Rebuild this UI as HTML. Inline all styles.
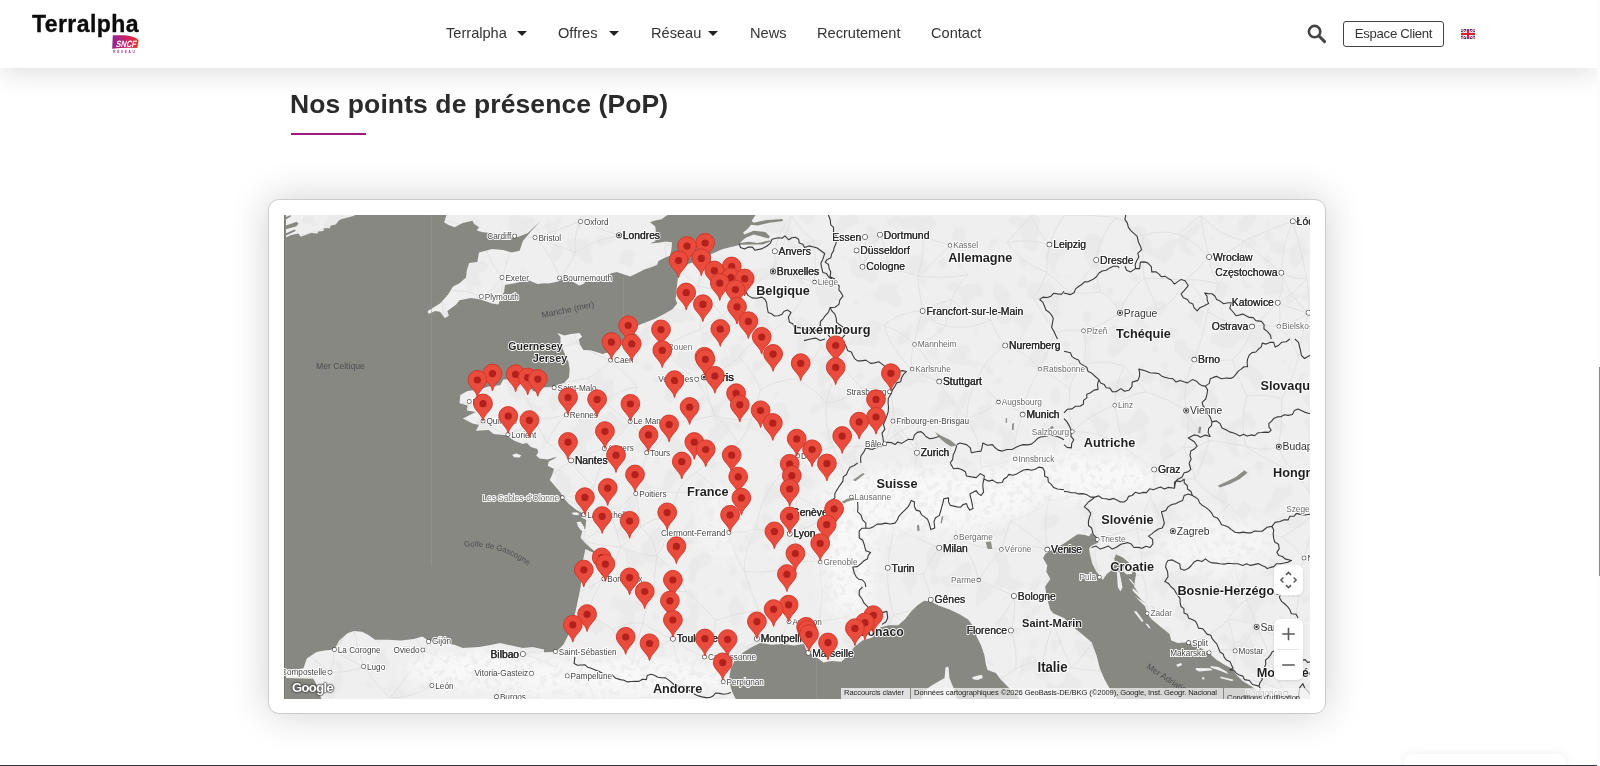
<!DOCTYPE html>
<html lang="fr">
<head>
<meta charset="utf-8">
<title>Nos points de présence (PoP) - Terralpha</title>
<style>
*{box-sizing:border-box;margin:0;padding:0}
html,body{width:1600px;height:766px;overflow:hidden;background:#fff;font-family:"Liberation Sans",Arial,sans-serif;color:#333}
body{position:relative;opacity:.999}
.header{position:absolute;left:0;top:0;width:1597px;height:68px;background:#fff;box-shadow:0 5px 28px rgba(0,0,0,.13);z-index:5}
.logo{position:absolute;left:32px;top:10px;font-weight:700;font-size:23px;letter-spacing:.42px;color:#0c0c0c;line-height:28px;-webkit-text-stroke:.35px #0c0c0c}
.sncf{position:absolute;left:112px;top:35px;width:28px;height:19px}
.nav a{position:absolute;top:24px;font-size:14.6px;line-height:18px;color:#333;text-decoration:none;white-space:nowrap}
.caret{position:absolute;top:31px;width:0;height:0;border-left:5px solid transparent;border-right:5px solid transparent;border-top:5.5px solid #222}
.search{position:absolute;left:1306px;top:23px;width:21px;height:21px}
.btn{position:absolute;left:1343px;top:21px;width:101px;height:26px;border:1px solid #444;border-radius:3px;font-size:13.2px;line-height:24px;text-align:center;color:#333;letter-spacing:-.3px}
.flag{position:absolute;left:1461px;top:29px;width:14px;height:10px}
h1{position:absolute;left:290px;top:88px;font-size:26.5px;line-height:32px;font-weight:700;color:#2b2b2b;white-space:nowrap;letter-spacing:.1px}
.rule{position:absolute;left:291px;top:132.8px;width:75px;height:2px;background:#a3187c}
.card{position:absolute;left:268px;top:199px;width:1058px;height:515px;background:#fff;border:1px solid #cdcdcd;border-radius:11px;box-shadow:0 0 38px rgba(0,0,0,.19)}
.map{position:absolute;left:284px;top:215px;width:1026px;height:484px;overflow:hidden;background:#efefef}
.mapsvg{position:absolute;left:0;top:0;display:block}
.ctl{position:absolute;background:#fff;border-radius:6px;box-shadow:0 1px 3px rgba(0,0,0,.12)}
.attr{position:absolute;font-size:7.6px;line-height:10.5px;color:#222;white-space:nowrap;height:11px;top:473px;padding:0 3px;letter-spacing:-.1px}
.glogo{position:absolute;left:8px;top:465px;font-size:13px;font-weight:700;color:#fff;letter-spacing:-.6px;-webkit-text-stroke:0;text-shadow:0 0 1.5px #444,0 0 1.5px #444,0 0 2px #444,0 0 2px #444}
.sb{position:absolute;left:1597px;top:0;width:3px;height:766px;background:#fcfcfc;z-index:6}
.sb i{position:absolute;left:1.7px;top:367px;width:1.3px;height:208.5px;background:#8a8a8a}
.bottom{position:absolute;left:0;top:764.6px;width:1600px;height:1.4px;background:#34344a}
.widget{position:absolute;left:1404px;top:754px;width:162px;height:30px;background:#fff;border-radius:8px;box-shadow:0 0 10px rgba(0,0,0,.08)}
</style>
</head>
<body>
<div class="header">
  <div class="logo">Terralpha</div>
  <svg class="sncf" viewBox="0 0 28 19"><defs><linearGradient id="sg" x1="0" y1="0" x2="1" y2="0"><stop offset="0" stop-color="#8b2a90"/><stop offset=".5" stop-color="#c81f6c"/><stop offset="1" stop-color="#ea3a28"/></linearGradient></defs><path d="M.8.2H12Q22 .6 26.6 5L25.4 13Q13 12.2.2 13.7Z" fill="url(#sg)"/><text transform="translate(3.6 12) skewX(-14)" font-family="Liberation Sans, Arial, sans-serif" font-size="9.2" font-weight="700" fill="#fff" textLength="20.3" lengthAdjust="spacingAndGlyphs">SNCF</text><text x="1.2" y="18.2" font-family="Liberation Sans, Arial, sans-serif" font-size="3.1" font-weight="700" fill="#9a2a8a" textLength="21.5">RÉSEAU</text></svg>
  <div class="nav">
    <a style="left:446px">Terralpha</a><span class="caret" style="left:517px"></span>
    <a style="left:558px">Offres</a><span class="caret" style="left:609px"></span>
    <a style="left:651px">Réseau</a><span class="caret" style="left:708px"></span>
    <a style="left:750px">News</a>
    <a style="left:817px">Recrutement</a>
    <a style="left:931px">Contact</a>
  </div>
  <svg class="search" viewBox="0 0 21 21"><circle cx="8.6" cy="8.6" r="5.7" fill="none" stroke="#444" stroke-width="2.6"/><path d="M13 13L18.6 18.6" stroke="#444" stroke-width="3" stroke-linecap="round"/></svg>
  <div class="btn">Espace Client</div>
  <svg class="flag" viewBox="0 0 14 10"><rect width="14" height="10" fill="#2a3a8c"/><path d="M0 0L14 10M14 0L0 10" stroke="#fff" stroke-width="2.2"/><path d="M0 0L14 10M14 0L0 10" stroke="#d4213a" stroke-width=".9"/><path d="M7 0V10M0 5H14" stroke="#fff" stroke-width="3.4"/><path d="M7 0V10M0 5H14" stroke="#d4213a" stroke-width="2"/></svg>
</div>
<h1>Nos points de présence (PoP)</h1>
<div class="rule"></div>
<div class="card"></div>
<div class="map">
<svg width="1026" height="484" viewBox="0 0 1026 484" class="mapsvg">
<defs><clipPath id="mc"><rect width="1026" height="484"/></clipPath>
<filter id="bl" x="-20%" y="-20%" width="140%" height="140%"><feGaussianBlur stdDeviation="9"/></filter>
<filter id="tx" x="0" y="0" width="100%" height="100%"><feTurbulence type="fractalNoise" baseFrequency=".045" numOctaves="2" seed="4"/><feColorMatrix values="0 0 0 0 0 0 0 0 0 0 0 0 0 0 0 -14 0 0 0 6.3"/></filter>
<filter id="sp" x="0" y="0" width="100%" height="100%"><feTurbulence type="fractalNoise" baseFrequency=".16" numOctaves="2" seed="9"/><feColorMatrix values="0 0 0 0 .8 0 0 0 0 .8 0 0 0 0 .8 -11 0 0 0 5.2"/></filter>
<g id="pin"><path d="M0 17.2C-.7 12.2-5 9.1-7.55 5.4A9.4 9.4 0 1 1 7.55 5.4C5 9.1.7 12.2 0 17.2Z" fill="#e94b3c" stroke="#cf3628" stroke-width=".9"/><circle r="3.6" fill="#b3211c"/></g>
</defs>
<g clip-path="url(#mc)">
<rect width="1026" height="484" fill="#efefef"/>
<rect width="1026" height="484" fill="#000" filter="url(#tx)" opacity=".016"/>
<path d="M296.5 6.5Q274.0 15.3 251.0 22.5M296.5 6.5Q315.5 14.2 335.0 20.3M296.5 6.5Q289.3 21.3 291.6 37.6M230.7 21.1Q240.9 21.5 251.0 22.5M230.7 21.1Q224.2 41.8 218.0 62.5M230.7 21.1Q214.7 18.2 198.4 17.3M251.0 22.5Q267.8 40.0 275.5 63.0M251.0 22.5Q271.2 30.2 291.6 37.6M335.0 20.3Q359.4 21.1 383.6 17.5M335.0 20.3Q311.5 24.4 291.6 37.6M218.0 62.5Q210.4 75.0 197.3 81.5M218.0 62.5Q219.4 83.6 214.9 104.3M218.0 62.5Q201.5 42.8 198.4 17.3M275.5 63.0Q276.0 81.2 284.2 97.4M275.5 63.0Q285.3 51.4 291.6 37.6M197.3 81.5Q209.9 90.0 214.9 104.3M197.3 81.5Q178.8 72.5 158.7 77.0M197.3 81.5Q174.5 86.8 159.5 104.7M581.0 22.0Q588.6 21.7 596.0 19.8M581.0 22.0Q576.2 28.3 572.5 35.4M581.0 22.0Q583.4 37.2 578.5 51.7M596.0 19.8Q587.0 31.7 572.5 35.4M596.0 19.8Q586.9 35.6 578.5 51.7M596.0 19.8Q617.5 13.7 638.6 21.1M596.0 19.8Q604.2 37.4 604.2 56.8M572.5 35.4Q577.0 43.0 578.5 51.7M578.5 51.7Q592.2 49.9 604.2 56.8M666.0 30.4Q650.2 46.3 633.5 61.3M666.0 30.4Q652.1 26.3 638.6 21.1M666.0 30.4Q671.3 47.2 683.8 59.7M530.6 67.0Q509.9 61.4 489.0 56.4M530.6 67.0Q532.5 46.3 530.2 25.7M530.6 67.0Q518.1 84.2 505.6 101.4M638.6 95.9Q632.6 112.2 630.5 129.4M638.6 95.9Q635.5 78.7 633.5 61.3M638.6 95.9Q652.2 87.9 667.5 84.6M638.6 95.9Q647.4 107.5 661.5 110.8M638.6 95.9Q616.6 96.2 599.7 110.4M765.4 29.6Q744.4 23.4 723.0 27.6M765.4 29.6Q762.0 43.2 762.8 57.2M765.4 29.6Q770.8 13.9 780.1 0.2M765.4 29.6Q753.5 16.8 747.2 0.5M812.2 45.0Q801.4 63.1 785.6 77.2M812.2 45.0Q815.5 20.7 831.9 2.5M812.2 45.0Q811.4 61.5 816.7 77.1M925.1 41.9Q919.4 21.5 916.7 0.5M925.1 41.9Q926.3 56.6 934.4 69.1M925.1 41.9Q914.1 54.4 901.3 65.0M925.1 41.9Q945.2 39.7 960.1 26.0M925.1 41.9Q912.4 26.7 894.0 19.2M997.4 57.7Q1000.9 73.4 993.7 87.7M997.4 57.7Q997.7 30.8 1008.8 6.2M997.4 57.7Q1005.0 81.8 1024.5 97.8M997.4 57.7Q978.4 42.3 960.1 26.0M997.4 57.7Q1009.2 64.8 1022.9 63.0M993.7 87.7Q981.7 100.6 968.0 111.6M993.7 87.7Q997.9 99.3 994.8 111.3M993.7 87.7Q1008.6 94.2 1024.5 97.8M993.7 87.7Q1010.8 78.3 1022.9 63.0M836.0 97.8Q819.2 109.8 799.5 115.7M836.0 97.8Q843.0 76.9 860.2 63.2M836.0 97.8Q854.9 94.2 874.1 95.1M836.0 97.8Q829.8 84.2 816.7 77.1M799.5 115.7Q784.9 113.6 770.6 116.9M799.5 115.7Q803.9 132.8 799.0 149.8M968.0 111.6Q981.4 109.0 994.8 111.3M968.0 111.6Q943.6 110.4 923.6 96.5M968.0 111.6Q963.5 131.3 948.5 144.8M994.8 111.3Q1011.1 107.7 1024.5 97.8M994.8 111.3Q1008.2 124.3 1014.5 141.9M1008.8 6.2Q984.0 15.1 960.1 26.0M1008.8 6.2Q1016.9 34.3 1022.9 63.0M490.8 36.2Q492.1 46.5 489.0 56.4M490.8 36.2Q511.4 34.2 530.2 25.7M490.8 36.2Q494.4 16.2 507.4 0.6M489.0 56.4Q501.1 29.4 507.4 0.6M489.0 56.4Q474.1 69.5 454.6 73.2M326.6 145.1Q340.7 157.6 353.3 171.7M326.6 145.1Q317.0 156.5 303.7 163.1M326.6 145.1Q308.4 139.3 293.1 127.9M326.6 145.1Q327.5 131.4 319.9 119.9M380.6 131.8Q393.1 151.6 412.7 164.3M380.6 131.8Q397.3 120.8 416.4 114.9M380.6 131.8Q370.2 112.4 351.4 101.2M412.7 164.3Q416.1 162.5 420.0 162.2M412.7 164.3Q423.2 181.8 431.0 200.7M420.0 162.2Q440.1 156.5 455.0 141.9M420.0 162.2Q423.5 182.0 431.0 200.7M270.1 172.7Q280.1 184.5 282.3 199.9M270.1 172.7Q254.1 171.0 240.5 179.7M270.1 172.7Q261.4 154.5 260.7 134.3M270.1 172.7Q286.0 165.0 303.7 163.1M282.3 199.9Q269.9 211.9 262.9 227.7M282.3 199.9Q266.8 204.2 250.6 204.6M346.1 206.4Q335.2 221.8 320.4 233.4M346.1 206.4Q359.2 219.5 362.7 237.7M346.1 206.4Q344.6 188.0 353.3 171.7M346.1 206.4Q365.8 208.8 385.6 208.9M346.1 206.4Q331.2 198.2 320.2 185.3M320.4 233.4Q303.3 238.2 287.1 245.4M320.4 233.4Q316.9 252.6 310.0 270.9M362.7 237.7Q357.9 258.3 351.8 278.5M362.7 237.7Q378.9 227.1 385.6 208.9M287.1 245.4Q267.3 260.6 247.2 275.2M287.1 245.4Q275.5 235.9 262.9 227.7M287.1 245.4Q295.2 261.2 310.0 270.9M185.2 186.5Q194.3 194.7 199.0 206.0M185.2 186.5Q183.8 205.4 173.6 221.5M185.2 186.5Q166.1 191.4 152.8 205.9M199.0 206.0Q209.9 215.6 223.9 219.5M199.0 206.0Q187.7 216.0 173.6 221.5M223.9 219.5Q222.5 235.9 214.2 250.1M223.9 219.5Q238.6 214.4 250.6 204.6M630.5 129.4Q625.4 141.4 628.1 154.1M630.5 129.4Q646.9 145.3 655.2 166.6M630.5 129.4Q649.0 125.1 661.5 110.8M630.5 129.4Q617.7 115.7 599.7 110.4M628.1 154.1Q641.2 161.4 655.2 166.6M628.1 154.1Q617.5 166.1 605.6 176.8M628.1 154.1Q607.7 136.3 599.7 110.4M721.2 130.5Q742.5 136.5 755.9 154.1M721.2 130.5Q701.6 142.9 693.3 164.5M721.2 130.5Q711.8 119.1 707.1 105.0M655.2 166.6Q666.3 187.2 682.9 203.7M655.2 166.6Q674.1 162.2 693.3 164.5M755.9 154.1Q741.9 174.8 738.6 199.6M755.9 154.1Q764.5 136.0 770.6 116.9M755.9 154.1Q772.4 162.2 785.8 174.7M605.6 176.8Q610.7 191.1 608.9 206.1M605.6 176.8Q591.6 172.5 577.1 172.8M714.5 187.0Q728.5 189.6 738.6 199.6M714.5 187.0Q700.3 198.4 682.9 203.7M714.5 187.0Q704.4 175.3 693.3 164.5M738.6 199.6Q729.3 220.8 731.2 243.9M608.9 206.1Q603.9 217.1 600.8 228.8M608.9 206.1Q623.4 220.0 632.9 237.7M608.9 206.1Q622.0 210.8 635.6 207.5M788.4 216.6Q806.7 198.9 830.7 190.3M788.4 216.6Q816.9 215.7 839.8 232.7M788.4 216.6Q783.6 195.9 785.8 174.7M788.4 216.6Q783.8 233.3 777.9 249.6M600.8 228.8Q618.3 228.2 632.9 237.7M600.8 228.8Q615.7 214.1 635.6 207.5M600.8 228.8Q575.1 232.7 549.1 231.6M632.9 237.7Q629.1 261.5 627.7 285.6M632.9 237.7Q630.2 222.2 635.6 207.5M731.2 243.9Q714.6 250.0 697.1 252.7M731.2 243.9Q753.8 253.3 777.9 249.6M910.3 144.6Q897.4 168.6 902.2 195.5M910.3 144.6Q919.7 121.3 923.6 96.5M910.3 144.6Q929.4 147.3 948.5 144.8M830.7 190.3Q834.0 211.8 839.8 232.7M830.7 190.3Q830.7 169.6 840.7 151.4M830.7 190.3Q844.2 178.4 862.1 177.0M902.2 195.5Q907.4 214.5 899.7 232.5M902.2 195.5Q909.4 213.8 925.4 225.3M902.2 195.5Q883.5 183.3 862.1 177.0M994.8 231.7Q999.2 247.9 1012.4 258.2M994.8 231.7Q978.2 237.0 961.8 231.0M994.8 231.7Q998.6 207.9 997.7 183.8M351.8 278.5Q354.6 295.1 356.9 311.7M351.8 278.5Q337.8 288.5 327.9 302.5M351.8 278.5Q372.5 275.3 393.3 277.4M299.8 299.7Q292.2 287.3 278.4 282.5M299.8 299.7Q303.3 313.2 298.7 326.4M299.8 299.7Q313.8 301.6 327.9 302.5M299.8 299.7Q307.3 286.2 310.0 270.9M444.9 317.5Q447.5 297.2 438.9 278.6M444.9 317.5Q449.3 338.2 460.4 356.3M444.9 317.5Q458.8 317.8 472.3 314.1M505.7 318.7Q528.9 312.3 547.5 297.0M505.7 318.7Q516.7 337.5 536.2 347.1M505.7 318.7Q505.1 336.1 500.9 353.1M505.7 318.7Q489.3 314.1 472.3 314.1M505.7 318.7Q514.4 300.9 512.3 281.2M319.8 363.9Q306.9 380.7 304.2 401.7M319.8 363.9Q307.2 371.7 293.8 377.9M319.8 363.9Q331.5 349.7 336.6 332.1M567.4 281.8Q555.5 286.8 547.5 297.0M567.4 281.8Q587.9 298.4 610.0 312.8M567.4 281.8Q560.5 255.9 549.1 231.6M547.5 297.0Q529.2 290.6 512.3 281.2M513.7 240.7Q501.5 252.6 490.9 265.8M513.7 240.7Q531.8 237.6 549.1 231.6M513.7 240.7Q519.1 261.1 512.3 281.2M536.2 347.1Q535.9 361.4 538.3 375.4M536.2 347.1Q517.5 343.8 500.9 353.1M603.7 352.8Q620.5 360.8 639.1 359.0M603.7 352.8Q602.7 376.8 609.4 399.9M603.7 352.8Q605.2 332.6 610.0 312.8M655.2 332.8Q664.4 329.0 671.9 322.3M655.2 332.8Q646.4 345.4 639.1 359.0M655.2 332.8Q632.2 323.8 610.0 312.8M671.9 322.3Q693.2 333.9 717.4 334.4M671.9 322.3Q689.7 340.2 694.7 365.0M671.9 322.3Q673.0 301.2 666.6 281.0M717.4 334.4Q740.4 326.7 763.3 334.6M717.4 334.4Q704.9 348.9 694.7 365.0M717.4 334.4Q721.8 320.1 726.6 306.0M763.3 334.6Q759.1 310.2 764.4 285.9M763.3 334.6Q747.0 317.7 726.6 306.0M694.7 365.0Q712.3 372.9 729.9 380.9M870.2 254.5Q855.9 242.3 839.8 232.7M870.2 254.5Q889.2 265.5 911.0 264.1M870.2 254.5Q883.0 240.9 899.7 232.5M870.2 254.5Q873.1 268.9 866.3 281.9M888.9 316.2Q870.6 317.5 852.7 313.6M888.9 316.2Q904.1 318.3 919.4 316.6M888.9 316.2Q905.6 329.7 915.3 348.9M888.9 316.2Q873.5 301.7 866.3 281.9M813.3 324.4Q808.8 343.6 815.4 362.2M813.3 324.4Q809.5 302.0 800.7 281.1M813.3 324.4Q832.8 318.2 852.7 313.6M815.4 362.2Q809.1 389.5 818.0 416.1M815.4 362.2Q836.9 358.5 858.7 360.3M50.4 434.6Q64.0 444.8 79.6 451.6M50.4 434.6Q50.7 446.4 46.0 457.3M50.4 434.6Q25.8 429.4 1.8 421.8M50.4 434.6Q62.4 421.6 67.8 404.8M138.9 435.0Q143.0 431.5 144.6 426.4M138.9 435.0Q138.5 454.0 147.9 470.6M138.9 435.0Q153.4 418.6 170.5 404.9M138.9 435.0Q129.5 418.1 118.1 402.4M138.9 435.0Q125.3 461.1 105.3 482.8M138.9 435.0Q155.0 439.9 166.5 452.1M144.6 426.4Q157.5 415.6 170.5 404.9M144.6 426.4Q134.2 411.2 118.1 402.4M144.6 426.4Q152.3 442.0 166.5 452.1M238.9 439.0Q241.7 449.4 247.5 458.4M238.9 439.0Q218.8 456.1 212.5 481.7M238.9 439.0Q254.9 435.1 271.4 436.5M238.9 439.0Q263.7 444.7 283.2 460.9M238.9 439.0Q224.8 447.7 210.1 455.4M238.9 439.0Q234.0 418.1 236.0 396.7M79.6 451.6Q63.4 457.9 46.0 457.3M79.6 451.6Q72.2 428.5 67.8 404.8M79.6 451.6Q91.0 468.4 105.3 482.8M46.0 457.3Q23.8 439.6 1.8 421.8M247.5 458.4Q231.5 472.4 212.5 481.7M247.5 458.4Q262.1 450.4 271.4 436.5M247.5 458.4Q264.9 465.8 283.2 460.9M247.5 458.4Q228.8 457.6 210.1 455.4M147.9 470.6Q128.5 483.2 105.3 482.8M147.9 470.6Q154.1 458.2 166.5 452.1M212.5 481.7Q214.8 468.2 210.1 455.4M271.4 436.5Q281.3 446.8 283.2 460.9M388.9 423.7Q403.3 435.2 420.5 441.9M388.9 423.7Q368.2 434.5 348.8 447.3M388.9 423.7Q372.9 417.9 359.1 408.0M388.9 423.7Q389.6 438.6 396.3 452.0M420.5 441.9Q434.1 451.1 439.2 466.7M420.5 441.9Q408.4 464.6 386.8 478.4M420.5 441.9Q408.6 447.3 396.3 452.0M420.5 441.9Q438.0 437.2 454.7 444.1M420.5 441.9Q430.5 425.0 431.7 405.4M439.2 466.7Q416.4 463.4 396.3 452.0M439.2 466.7Q444.0 453.4 454.7 444.1M472.9 423.7Q469.3 409.1 475.0 395.3M472.9 423.7Q482.8 433.5 494.4 441.3M472.9 423.7Q491.5 444.1 508.4 465.9M472.9 423.7Q462.8 433.1 454.7 444.1M505.0 406.6Q490.6 399.3 475.0 395.3M505.0 406.6Q495.9 422.8 494.4 441.3M505.0 406.6Q520.4 411.3 535.6 406.0M646.7 384.7Q644.6 371.4 639.1 359.0M646.7 384.7Q629.7 396.4 609.4 399.9M646.7 384.7Q641.5 399.9 635.7 414.9M729.9 380.9Q732.4 398.5 726.9 415.5M729.9 380.9Q721.8 404.5 700.7 417.7M726.9 415.5Q748.0 411.8 769.3 408.9M726.9 415.5Q713.6 414.6 700.7 417.7M726.9 415.5Q733.7 434.0 731.7 453.7M524.4 437.8Q509.7 442.0 494.4 441.3M524.4 437.8Q518.0 452.8 508.4 465.9M524.4 437.8Q532.2 422.7 535.6 406.0M863.2 398.3Q840.4 406.9 818.0 416.1M863.2 398.3Q856.4 411.3 851.9 425.2M863.2 398.3Q864.5 378.9 858.7 360.3M904.6 427.7Q915.2 432.0 925.1 437.8M904.6 427.7Q890.0 441.2 882.2 459.4M904.6 427.7Q927.8 421.9 944.3 404.5M925.1 437.8Q937.8 433.0 951.1 435.9M925.1 437.8Q932.7 454.1 948.1 463.1M951.1 435.9Q963.8 425.6 972.6 411.8M951.1 435.9Q969.5 434.4 986.1 442.3M951.1 435.9Q950.1 449.6 948.1 463.1M951.1 435.9Q949.1 419.9 944.3 404.5M972.6 411.8Q988.7 422.2 1008.0 422.2M972.6 411.8Q980.7 426.4 986.1 442.3M972.6 411.8Q968.4 398.0 962.9 384.7M972.6 411.8Q959.4 404.3 944.3 404.5M278.4 282.5Q263.6 275.5 247.2 275.2M278.4 282.5Q296.0 281.8 310.0 270.9M1033.5 293.7Q1027.4 318.5 1020.0 343.0M1033.5 293.7Q1024.9 274.8 1012.4 258.2M1033.5 293.7Q1018.7 311.6 998.0 321.9M1020.0 343.0Q1010.7 330.7 998.0 321.9M1020.0 343.0Q1013.0 361.6 1014.8 381.4M1024.5 97.8Q1017.3 119.3 1014.5 141.9M1024.5 97.8Q1026.4 80.3 1022.9 63.0M1001.7 478.2Q990.2 461.8 986.1 442.3M1001.7 478.2Q977.1 463.0 948.1 463.1M1001.7 478.2Q988.0 473.5 974.3 478.2M815.9 456.1Q823.8 436.5 818.0 416.1M815.9 456.1Q801.7 454.3 787.5 453.2M815.9 456.1Q835.4 464.0 856.3 463.3M759.1 446.4Q761.8 427.0 769.3 408.9M759.1 446.4Q772.3 454.0 787.5 453.2M759.1 446.4Q744.5 446.5 731.7 453.7M29.8 225.4Q23.0 246.0 11.9 264.7M29.8 225.4Q10.8 215.1 0.7 196.2M29.8 225.4Q46.6 229.3 63.0 234.6M29.8 225.4Q41.1 214.9 51.7 203.6M967.9 314.1Q982.2 320.9 998.0 321.9M967.9 314.1Q956.5 301.9 945.3 289.6M967.9 314.1Q963.5 331.5 949.5 342.6M481.3 119.3Q465.6 127.7 455.0 141.9M481.3 119.3Q457.3 116.9 439.0 101.3M481.3 119.3Q495.4 113.0 505.6 101.4M13.5 104.9Q17.7 89.4 28.3 77.5M13.5 104.9Q26.4 112.1 37.4 122.2M13.5 104.9Q7.7 125.9 10.8 147.5M13.5 104.9Q0.7 83.1 0.1 57.8M785.6 77.2Q768.2 84.8 749.3 83.2M785.6 77.2Q774.3 67.1 762.8 57.2M785.6 77.2Q801.2 79.7 816.7 77.1M633.5 61.3Q641.0 41.8 638.6 21.1M633.5 61.3Q658.8 63.9 683.8 59.7M633.5 61.3Q619.6 54.4 604.2 56.8M1.8 421.8Q10.1 401.5 18.5 381.3M214.9 104.3Q217.6 125.5 232.2 141.1M214.9 104.3Q215.1 122.8 205.1 138.4M1008.0 422.2Q999.1 434.4 986.1 442.3M1008.0 422.2Q1011.8 401.9 1014.8 381.4M708.6 467.8Q685.0 467.8 662.5 460.9M708.6 467.8Q692.0 448.4 670.1 435.4M708.6 467.8Q720.9 461.9 731.7 453.7M370.6 80.3Q392.5 76.0 414.3 70.9M370.6 80.3Q381.1 65.6 383.5 47.7M370.6 80.3Q360.5 90.3 351.4 101.2M149.5 31.5Q157.2 53.6 158.7 77.0M149.5 31.5Q128.5 42.5 106.0 49.8M149.5 31.5Q155.4 18.0 154.3 3.3M3.5 328.1Q3.3 356.9 18.5 381.3M3.5 328.1Q17.1 336.5 26.2 349.7M3.5 328.1Q29.2 339.6 57.2 337.5M723.0 27.6Q737.9 49.1 762.8 57.2M723.0 27.6Q735.3 14.3 747.2 0.5M769.3 408.9Q777.2 431.5 787.5 453.2M18.5 381.3Q19.0 364.7 26.2 349.7M18.5 381.3Q40.5 379.8 62.4 377.2M9.3 22.6Q18.8 50.1 28.3 77.5M9.3 22.6Q34.4 16.7 58.3 7.0M9.3 22.6Q10.7 41.8 0.1 57.8M201.6 365.8Q218.9 352.8 224.7 332.0M201.6 365.8Q218.6 381.4 236.0 396.7M201.6 365.8Q183.5 353.2 167.4 338.2M353.3 171.7Q335.3 174.9 320.2 185.3M538.3 375.4Q551.6 389.1 566.1 401.6M538.3 375.4Q537.1 390.7 535.6 406.0M110.9 362.2Q111.7 382.8 118.1 402.4M110.9 362.2Q93.1 346.4 87.5 323.3M110.9 362.2Q131.2 370.7 152.1 378.0M818.0 416.1Q803.9 435.6 787.5 453.2M818.0 416.1Q833.4 426.2 851.9 425.2M93.6 164.9Q97.6 148.0 91.5 131.8M93.6 164.9Q105.0 155.8 118.7 150.9M93.6 164.9Q113.6 168.5 133.5 172.9M93.6 164.9Q93.8 181.1 86.0 195.2M626.7 444.4Q611.8 454.8 596.0 463.8M626.7 444.4Q642.7 456.7 662.5 460.9M626.7 444.4Q635.5 430.9 635.7 414.9M348.8 447.3Q368.1 462.5 386.8 478.4M348.8 447.3Q351.4 427.0 359.1 408.0M348.8 447.3Q335.3 433.1 329.0 414.6M559.3 151.2Q567.3 162.8 577.1 172.8M559.3 151.2Q545.2 167.1 542.5 188.2M559.3 151.2Q545.5 143.6 537.4 130.2M325.0 85.9Q303.5 87.5 284.2 97.4M325.0 85.9Q340.8 89.0 351.4 101.2M325.0 85.9Q326.2 103.5 319.9 119.9M80.2 72.1Q93.9 80.6 103.4 93.7M80.2 72.1Q94.6 62.7 106.0 49.8M80.2 72.1Q75.0 86.9 66.1 99.9M1012.4 258.2Q985.6 247.2 961.8 231.0M416.4 114.9Q417.3 92.8 414.3 70.9M416.4 114.9Q425.8 104.9 439.0 101.3M609.4 399.9Q621.3 409.6 635.7 414.9M609.4 399.9Q600.9 420.5 583.1 433.9M467.5 204.1Q472.1 189.5 476.4 174.7M467.5 204.1Q463.0 217.5 454.2 228.4M467.5 204.1Q448.9 206.4 431.0 200.7M860.2 63.2Q866.8 79.3 874.1 95.1M860.2 63.2Q880.8 63.2 901.3 65.0M860.2 63.2Q857.7 42.1 858.9 20.9M109.4 210.3Q97.2 203.5 86.0 195.2M109.4 210.3Q109.6 229.0 110.7 247.6M109.4 210.3Q130.5 202.8 152.8 205.9M500.9 353.1Q481.0 359.0 460.4 356.3M414.3 70.9Q419.9 46.6 420.8 21.8M414.3 70.9Q400.0 57.8 383.5 47.7M414.3 70.9Q426.3 86.4 439.0 101.3M414.3 70.9Q434.1 77.1 454.6 73.2M386.8 478.4Q392.6 465.6 396.3 452.0M512.3 163.8Q493.0 164.7 476.4 174.7M512.3 163.8Q529.7 173.1 542.5 188.2M512.3 163.8Q527.8 149.2 537.4 130.2M91.5 131.8Q102.9 144.4 118.7 150.9M91.5 131.8Q103.0 114.5 103.4 93.7M91.5 131.8Q76.9 130.8 63.1 126.1M370.7 380.4Q369.2 360.6 372.9 341.0M370.7 380.4Q360.7 392.4 359.1 408.0M370.7 380.4Q386.5 375.3 402.9 376.8M372.9 341.0Q370.2 323.5 356.9 311.7M372.9 341.0Q385.0 323.6 386.4 302.5M372.9 341.0Q392.6 354.9 402.9 376.8M372.9 341.0Q353.9 339.9 336.6 332.1M666.6 281.0Q646.8 280.2 627.7 285.6M666.6 281.0Q679.4 264.2 697.1 252.7M11.9 264.7Q24.9 268.8 33.7 279.3M11.9 264.7Q37.0 275.6 64.3 273.9M257.2 325.1Q241.2 329.5 224.7 332.0M257.2 325.1Q255.0 344.6 260.8 363.3M257.2 325.1Q278.1 320.2 298.7 326.4M475.0 395.3Q466.3 376.3 460.4 356.3M475.0 395.3Q452.7 397.5 431.7 405.4M356.9 311.7Q370.1 302.0 386.4 302.5M356.9 311.7Q349.0 324.1 336.6 332.1M356.9 311.7Q343.0 305.2 327.9 302.5M359.1 408.0Q343.1 406.8 329.0 414.6M170.5 404.9Q165.8 388.3 152.1 378.0M961.8 231.0Q955.4 205.9 962.9 181.1M961.8 231.0Q943.6 228.1 925.4 225.3M749.3 83.2Q758.5 71.4 762.8 57.2M749.3 83.2Q759.9 100.1 770.6 116.9M800.7 281.1Q782.2 281.1 764.4 285.9M800.7 281.1Q785.8 267.9 777.9 249.6M682.9 203.7Q697.6 226.0 697.1 252.7M682.9 203.7Q682.5 182.6 693.3 164.5M28.3 77.5Q51.0 82.4 66.1 99.9M28.3 77.5Q14.6 67.1 0.1 57.8M224.7 332.0Q242.6 347.8 260.8 363.3M198.4 17.3Q176.7 9.2 154.3 3.3M627.7 285.6Q622.3 301.5 610.0 312.8M0.7 196.2Q27.0 194.1 51.7 203.6M0.7 196.2Q0.5 170.8 10.8 147.5M118.1 402.4Q138.1 394.3 152.1 378.0M383.6 17.5Q401.5 26.2 420.8 21.8M383.6 17.5Q378.9 32.6 383.5 47.7M596.0 463.8Q581.5 476.2 562.7 479.0M596.0 463.8Q584.8 450.9 583.1 433.9M916.7 0.5Q934.2 20.3 960.1 26.0M916.7 0.5Q905.6 10.2 894.0 19.2M110.7 273.9Q115.3 288.7 125.1 300.9M110.7 273.9Q87.5 276.8 64.3 273.9M110.7 273.9Q110.4 260.7 110.7 247.6M385.6 208.9Q408.3 205.1 431.0 200.7M232.2 141.1Q237.3 160.2 240.5 179.7M232.2 141.1Q246.7 138.7 260.7 134.3M232.2 141.1Q218.2 144.5 205.1 138.4M997.7 183.8Q1009.2 164.1 1014.5 141.9M997.7 183.8Q980.7 178.2 962.9 181.1M986.1 442.3Q984.4 461.6 974.3 478.2M125.1 300.9Q141.0 291.7 157.5 283.6M125.1 300.9Q104.3 308.9 87.5 323.3M125.1 300.9Q148.6 302.0 171.8 306.3M455.0 141.9Q469.3 156.0 476.4 174.7M764.4 285.9Q747.9 300.5 726.6 306.0M764.4 285.9Q771.3 267.8 777.9 249.6M37.4 122.2Q47.9 106.0 66.1 99.9M37.4 122.2Q49.7 127.8 63.1 126.1M37.4 122.2Q21.3 131.9 10.8 147.5M911.0 264.1Q907.7 247.5 899.7 232.5M911.0 264.1Q924.8 281.3 945.3 289.6M911.0 264.1Q920.0 245.4 925.4 225.3M438.9 278.6Q425.1 268.8 412.8 257.2M438.9 278.6Q416.1 276.4 393.3 277.4M494.4 441.3Q501.4 453.6 508.4 465.9M874.1 95.1Q892.9 84.8 901.3 65.0M304.2 401.7Q301.6 388.7 293.8 377.9M304.2 401.7Q317.7 406.0 329.0 414.6M67.8 404.8Q69.2 390.2 62.4 377.2M293.8 377.9Q278.6 367.7 260.8 363.3M934.4 69.1Q918.2 63.7 901.3 65.0M934.4 69.1Q952.1 50.5 960.1 26.0M934.4 69.1Q929.9 83.1 923.6 96.5M490.9 265.8Q474.7 287.3 472.3 314.1M490.9 265.8Q499.5 276.4 512.3 281.2M157.5 283.6Q163.1 295.9 171.8 306.3M157.5 283.6Q159.9 267.1 155.9 250.9M236.0 396.7Q251.6 382.3 260.8 363.3M26.2 349.7Q41.3 342.6 57.2 337.5M662.5 460.9Q668.3 448.7 670.1 435.4M73.9 27.9Q84.9 18.0 99.5 16.1M73.9 27.9Q91.2 37.0 106.0 49.8M73.9 27.9Q65.9 17.6 58.3 7.0M901.3 65.0Q918.0 76.8 923.6 96.5M962.9 181.1Q953.9 163.7 948.5 144.8M57.2 337.5Q73.0 331.9 87.5 323.3M57.2 337.5Q58.1 357.6 62.4 377.2M240.5 179.7Q248.0 191.2 250.6 204.6M899.7 232.5Q913.7 233.0 925.4 225.3M852.7 313.6Q861.4 298.6 866.3 281.9M852.7 313.6Q858.4 336.6 858.7 360.3M99.5 16.1Q100.8 33.3 106.0 49.8M99.5 16.1Q79.1 10.5 58.3 7.0M99.5 16.1Q127.1 10.3 154.3 3.3M780.1 0.2Q806.1 -0.7 831.9 2.5M780.1 0.2Q763.6 -5.6 747.2 0.5M158.7 77.0Q157.7 90.9 159.5 104.7M260.7 134.3Q277.3 133.5 293.1 127.9M165.7 138.9Q185.4 142.4 205.1 138.4M165.7 138.9Q143.8 150.3 133.5 172.9M165.7 138.9Q156.7 122.9 159.5 104.7M298.7 326.4Q317.4 330.8 336.6 332.1M298.7 326.4Q315.3 317.0 327.9 302.5M420.8 21.8Q404.4 38.0 383.5 47.7M562.7 479.0Q535.1 474.4 508.4 465.9M562.7 479.0Q565.6 453.1 583.1 433.9M184.1 246.2Q199.5 244.8 214.2 250.1M184.1 246.2Q177.7 234.3 173.6 221.5M184.1 246.2Q170.7 252.6 155.9 250.9M412.8 257.2Q430.9 239.1 454.2 228.4M412.8 257.2Q400.1 264.4 393.3 277.4M945.3 289.6Q931.8 302.6 919.4 316.6M386.4 302.5Q389.9 290.0 393.3 277.4M118.7 150.9Q122.4 164.4 133.5 172.9M840.7 151.4Q850.8 164.7 862.1 177.0M840.7 151.4Q820.2 143.2 799.0 149.8M919.4 316.6Q915.7 332.5 915.3 348.9M919.4 316.6Q931.6 332.9 949.5 342.6M133.5 172.9Q148.2 186.4 152.8 205.9M882.2 459.4Q868.2 441.3 851.9 425.2M882.2 459.4Q868.9 458.9 856.3 463.3M962.9 384.7Q988.3 374.6 1014.8 381.4M962.9 384.7Q950.5 391.7 944.3 404.5M962.9 384.7Q951.1 365.3 949.5 342.6M33.7 279.3Q49.0 276.3 64.3 273.9M33.7 279.3Q43.0 253.4 63.0 234.6M284.2 97.4Q288.7 112.6 293.1 127.9M284.2 97.4Q301.2 110.1 319.9 119.9M577.1 172.8Q562.2 186.0 542.5 188.2M700.7 417.7Q682.5 421.7 670.1 435.4M320.2 185.3Q311.3 174.7 303.7 163.1M214.2 250.1Q230.4 263.0 247.2 275.2M670.1 435.4Q653.6 423.9 635.7 414.9M171.8 306.3Q171.1 322.4 167.4 338.2M64.3 273.9Q60.6 254.3 63.0 234.6M851.9 425.2Q852.0 444.5 856.3 463.3M63.0 234.6Q58.0 218.9 51.7 203.6M103.4 93.7Q85.3 99.7 66.1 99.9M948.1 463.1Q960.1 472.7 974.3 478.2M66.1 99.9Q66.6 113.2 63.1 126.1M86.0 195.2Q70.3 205.4 51.7 203.6M831.9 2.5Q847.1 9.2 858.9 20.9M785.8 174.7Q788.3 160.1 799.0 149.8M530.2 25.7Q515.7 16.0 507.4 0.6M454.2 228.4Q445.1 212.4 431.0 200.7M402.9 376.8Q418.5 390.0 431.7 405.4M152.1 378.0Q165.4 360.3 167.4 338.2M683.8 59.7Q673.5 70.7 667.5 84.6M173.6 221.5Q169.5 239.1 155.9 250.9M173.6 221.5Q165.9 210.0 152.8 205.9M155.9 250.9Q133.8 242.0 110.7 247.6M460.4 356.3Q459.8 333.4 472.3 314.1M542.5 188.2Q539.5 210.9 549.1 231.6M566.1 401.6Q550.9 404.5 535.6 406.0M566.1 401.6Q574.9 417.6 583.1 433.9M894.0 19.2Q876.1 14.1 858.9 20.9M915.3 348.9Q931.8 342.6 949.5 342.6M667.5 84.6Q664.3 97.7 661.5 110.8M667.5 84.6Q684.1 101.1 707.1 105.0M439.0 101.3Q449.0 88.5 454.6 73.2M262.9 227.7Q256.5 216.3 250.6 204.6M661.5 110.8Q685.3 115.8 707.1 105.0M351.4 101.2Q333.5 106.9 319.9 119.9M336.6 332.1Q333.4 317.0 327.9 302.5M293.1 127.9Q305.4 120.2 319.9 119.9M537.4 130.2Q522.8 114.4 505.6 101.4" fill="none" stroke="#dddddd" stroke-width=".75"/>
<mask id="mm"><g filter="url(#bl)"><ellipse cx="640" cy="285" rx="110" ry="32" fill="#fff"/><ellipse cx="790" cy="262" rx="90" ry="24" fill="#fff"/><ellipse cx="565" cy="345" rx="26" ry="60" fill="#fff"/><ellipse cx="330" cy="462" rx="130" ry="20" fill="#fff"/><ellipse cx="190" cy="455" rx="70" ry="20" fill="#fff"/><ellipse cx="930" cy="330" rx="60" ry="30" fill="#bbb"/><ellipse cx="440" cy="310" rx="30" ry="40" fill="#777"/></g></mask>
<g mask="url(#mm)"><rect width="1026" height="484" fill="#fafafa" opacity=".8"/><rect width="1026" height="484" fill="#d9d9d9" filter="url(#sp)" opacity=".55"/></g>
<path fill="#888882" d="M162.5 0.0 L160.1 7.3 L164.1 9.8 L170.6 12.2 L178.8 8.1 L188.5 5.7 L190.1 8.9 L195.0 12.2 L192.6 15.4 L197.4 17.1 L204.8 17.9 L216.1 19.5 L227.5 22.8 L234.0 21.9 L243.8 17.9 L256.8 5.7 L247.0 16.2 L238.9 26.0 L235.6 35.8 L227.5 37.4 L219.4 34.9 L208.0 34.1 L195.0 37.4 L193.4 47.1 L185.2 47.9 L182.8 55.2 L182.0 62.6 L175.5 68.2 L169.0 71.5 L164.1 79.6 L156.0 88.6 L149.5 92.6 L143.8 95.9 L144.6 99.1 L151.1 95.9 L156.0 96.7 L160.9 103.2 L164.9 100.8 L163.3 95.9 L172.2 89.4 L175.5 85.3 L186.9 82.9 L196.6 84.5 L208.0 88.6 L214.5 89.4 L216.1 84.5 L220.2 76.4 L221.0 69.9 L230.8 68.2 L243.8 65.0 L253.5 69.1 L260.0 68.2 L264.8 68.4 L273.2 66.8 L277.3 65.0 L285.7 65.3 L290.9 67.9 L295.1 70.5 L299.3 68.9 L304.5 63.9 L317.0 61.1 L328.5 58.0 L332.7 56.9 L340.0 59.5 L346.3 61.6 L352.5 58.5 L360.9 54.3 L367.1 52.2 L372.9 50.1 L374.5 46.0 L380.7 42.8 L385.9 40.7 L387.5 34.5 L388.0 27.2 L381.8 26.6 L374.5 27.7 L366.1 28.4 L371.3 26.3 L371.8 15.7 L371.3 11.5 L366.1 7.3 L370.3 5.7 L377.6 4.2 L381.8 1.0 L383.9 0.0 L471.5 0.0 L467.6 5.9 L469.6 7.8 L481.3 5.2 L498.3 3.9 L499.0 5.9 L485.2 7.8 L473.5 10.4 L467.0 9.8 L463.0 14.4 L459.1 17.6 L460.4 19.6 L469.6 15.7 L481.3 17.0 L485.9 21.5 L484.6 23.5 L477.4 21.5 L469.6 19.6 L461.7 22.8 L457.8 26.1 L455.9 28.1 L464.4 26.8 L473.5 28.1 L485.2 25.5 L487.9 26.1 L478.7 29.4 L467.0 29.4 L456.5 29.8 L438.8 34.1 L427.4 39.0 L422.5 43.9 L412.8 46.3 L404.6 48.8 L396.5 52.0 L394.1 61.8 L393.2 68.2 L392.4 76.4 L391.6 84.5 L393.2 88.6 L388.4 94.2 L380.2 99.1 L370.5 104.0 L357.5 108.9 L351.0 112.1 L347.8 117.0 L353.4 119.4 L346.1 121.9 L339.6 127.2 L334.8 133.8 L328.2 137.0 L320.1 138.3 L319.6 139.2 L306.5 135.3 L299.4 135.0 L296.1 129.8 L294.8 124.6 L298.1 121.7 L295.5 118.1 L287.0 119.1 L280.4 120.4 L273.3 118.1 L276.5 122.0 L276.5 128.5 L279.1 135.0 L282.4 142.9 L284.4 146.8 L285.7 154.6 L285.0 162.4 L280.4 167.7 L272.6 170.3 L267.4 171.8 L255.1 172.8 L250.2 176.8 L243.8 171.1 L237.2 167.1 L227.5 163.8 L219.4 164.6 L216.1 170.3 L206.4 171.1 L195.0 174.4 L183.6 176.0 L176.3 180.1 L175.5 188.2 L183.6 190.6 L182.8 195.5 L191.8 197.1 L178.8 203.6 L188.5 208.5 L195.0 210.1 L191.8 215.8 L204.8 215.0 L209.6 219.1 L222.6 220.2 L230.3 225.7 L238.7 228.9 L242.8 228.0 L247.0 232.0 L253.3 234.1 L254.3 237.2 L252.2 240.4 L255.4 243.5 L263.7 244.5 L270.0 242.4 L273.1 242.2 L264.8 246.6 L263.7 250.8 L270.0 253.9 L267.9 260.2 L265.8 265.0 L276.2 277.2 L278.7 282.1 L284.4 288.6 L292.5 295.1 L299.0 298.4 L297.4 302.4 L302.2 304.9 L301.4 313.0 L298.2 316.2 L296.6 322.8 L300.6 327.6 L304.7 331.2 L313.6 339.0 L314.9 340.9 L308.8 337.4 L301.4 334.1 L299.0 345.5 L297.7 361.8 L296.6 372.0 L296.6 372.0 L293.3 388.2 L289.7 404.5 L284.7 419.1 L279.8 428.9 L274.3 435.1 L269.8 437.0 L260.0 437.3 L260.0 434.6 L248.6 432.1 L238.9 432.9 L227.5 430.5 L216.1 428.1 L208.0 429.7 L195.0 432.1 L178.8 432.9 L170.6 429.7 L162.5 428.9 L144.6 425.6 L138.1 421.6 L130.0 424.0 L117.0 425.6 L104.0 424.8 L91.0 424.8 L84.5 419.9 L78.0 416.7 L69.9 415.9 L63.4 418.3 L55.2 425.6 L50.4 434.6 L40.6 435.4 L32.5 437.0 L22.8 443.5 L19.5 453.2 L9.8 454.9 L0.0 455.7 L-0.1 22.2 L1.5 22.5 L7.4 19.9 L14.6 18.6 L16.5 21.8 L20.4 20.5 L27.0 17.9 L33.5 18.6 L34.1 16.6 L39.4 15.9 L40.0 13.3 L45.9 13.3 L46.5 10.7 L51.8 9.4 L54.4 6.1 L57.0 4.2 L69.4 0.9 L71.4 -0.1Z"/>
<path fill="#888882" d="M0.0 463.0 L29.2 463.8 L32.5 469.5 L37.4 484.1 L0.0 484.1Z"/>
<path fill="#888882" d="M-0.1 2.9 L6.3 0.3 L7.4 0.9 L-0.1 5.9Z M-0.1 11.4 L12.6 6.8 L14.6 8.8 L12.0 11.4 L-0.1 14.9Z M1.5 18.6 L10.6 14.4 L12.0 15.7 L2.2 20.5 L-0.1 21.4 L-0.1 19.6Z"/>
<path fill="#888882" d="M451.8 484.1 L448.5 477.6 L446.9 472.8 L445.2 463.0 L446.9 453.2 L451.8 443.5 L459.9 437.0 L468.0 432.1 L476.1 428.1 L487.5 429.7 L498.9 428.9 L510.2 430.5 L520.0 428.9 L520.0 428.9 L523.2 437.0 L529.8 440.2 L539.5 447.6 L547.6 445.9 L557.4 446.8 L563.9 440.2 L570.4 432.1 L578.5 425.6 L588.2 422.4 L596.4 412.6 L604.5 410.2 L614.2 410.2 L620.8 404.5 L627.2 396.4 L633.8 389.9 L640.2 385.8 L646.8 386.6 L654.9 390.7 L666.2 394.8 L676.0 399.6 L684.1 404.5 L689.0 411.0 L692.2 420.8 L697.1 430.5 L700.4 440.2 L702.0 450.0 L703.6 454.9 L711.8 458.1 L716.6 464.6 L723.1 471.1 L728.0 476.0 L736.1 484.1Z"/>
<path fill="#888882" d="M833.6 484.1 L827.1 476.0 L820.6 464.6 L815.8 453.2 L812.5 440.2 L807.6 427.2 L797.9 419.1 L788.1 411.0 L780.0 402.9 L769.6 398.6 L766.4 395.0 L764.4 388.1 L762.3 379.8 L761.2 371.4 L766.4 364.1 L762.3 356.8 L763.3 350.5 L759.1 343.2 L761.2 339.0 L766.4 335.9 L780.0 328.6 L790.5 321.3 L793.6 319.2 L799.9 319.7 L805.1 321.3 L807.2 318.1 L812.4 324.4 L814.5 327.5 L807.2 330.7 L805.1 333.8 L806.1 340.1 L808.2 348.4 L812.4 356.8 L816.6 362.0 L818.7 365.1 L822.8 358.9 L827.0 355.7 L831.2 348.4 L830.2 343.2 L832.2 339.5 L838.5 342.2 L844.8 347.4 L850.0 354.7 L852.1 358.9 L851.0 365.1 L850.0 371.4 L854.2 377.7 L860.4 386.0 L864.6 390.2 L873.0 395.0 L835.2 372.0 L845.0 376.9 L853.1 383.4 L861.2 391.5 L862.9 398.0 L867.8 404.5 L877.5 412.6 L885.6 419.1 L887.2 425.6 L893.8 428.1 L904.3 427.2 L914.9 432.1 L924.6 437.8 L932.8 445.1 L940.9 450.0 L947.4 453.2 L952.2 459.8 L958.8 466.2 L966.9 471.1 L973.4 476.0 L978.2 484.1Z"/>
<path fill="#efefef" d="M663.0 451.6 L661.4 453.2 L660.6 463.0 L654.9 466.2 L646.8 471.1 L640.2 476.0 L637.0 484.1 L672.8 484.1 L669.5 472.8 L665.4 463.0 L664.6 452.4Z M688.2 462.2 L692.2 461.1 L697.9 459.8 L698.8 463.0 L693.9 464.9 L689.0 464.3Z M832.8 356.3 L835.4 356.8 L836.9 364.1 L838.5 372.4 L836.4 376.6 L833.8 371.9 L833.3 364.1Z M839.6 351.6 L844.8 350.5 L849.0 354.7 L847.9 358.9 L842.7 359.4 L839.0 356.3Z M844.8 364.1 L846.3 363.9 L850.5 369.3 L849.5 369.8Z M847.9 373.5 L850.0 374.0 L856.3 380.8 L860.4 386.0 L858.9 386.2 L853.1 380.3Z M849.9 396.4 L852.3 396.1 L859.6 406.1 L858.0 406.9Z M848.2 375.2 L851.5 375.6 L864.5 386.6 L867.8 391.5 L865.3 391.2 L856.4 383.4Z M861.2 408.6 L863.7 409.1 L866.9 413.4 L864.8 412.9Z M892.1 449.7 L897.0 448.1 L898.1 450.0 L893.8 451.9Z M911.6 452.9 L926.2 453.2 L928.7 455.2 L914.9 456.5 L912.0 454.9Z M926.2 451.1 L934.4 451.9 L942.5 456.5 L944.1 458.9 L936.0 455.7 L927.1 452.8Z M936.0 461.4 L949.0 464.6 L948.7 466.2 L936.8 463.3Z M893.8 437.0 L910.0 437.3 L910.8 439.9 L897.0 440.2Z M918.1 462.2 L920.6 462.5 L920.1 464.6 L918.1 464.3Z M228.3 239.7 L232.4 238.4 L237.2 240.3 L235.6 242.6 L229.9 242.3Z M287.6 297.7 L292.5 297.2 L295.4 298.7 L294.1 300.3 L289.2 299.7Z M292.5 307.3 L296.6 306.5 L300.3 312.2 L299.8 316.2 L297.1 315.4 L294.1 311.4Z"/>
<path fill="#8d8d88" d="M650.8 216.9 L658.1 221.2 L666.2 225.1 L672.8 230.4 L667.1 231.6 L661.4 228.0 L656.2 223.4Z M557.7 286.7 L562.6 284.1 L568.8 282.8 L574.4 285.7 L568.8 285.1 L563.5 286.4 L559.8 288.6Z M701.7 327.3 L706.9 326.3 L708.2 333.8 L703.6 334.1Z M568.9 265.1 L579.0 257.9 L580.8 258.9 L571.4 266.2Z M933.6 270.8 L942.5 266.7 L952.2 261.8 L960.4 255.3 L963.6 257.8 L955.5 264.2 L945.8 269.1 L936.0 272.4Z M632.9 310.6 L635.0 309.8 L635.7 315.4 L633.4 316.2Z M657.8 301.6 L659.4 301.3 L657.8 308.4 L656.5 308.1Z M721.5 203.6 L723.1 203.3 L723.1 207.7 L721.8 207.7Z M728.0 209.3 L730.0 207.7 L729.6 215.0 L728.0 215.0Z M765.4 212.6 L768.6 210.9 L769.9 213.1 L767.0 214.2Z M914.9 211.8 L917.3 211.8 L916.2 218.2 L914.1 217.9Z"/>
<path d="M147.5 0V351M920.5 540V484M339.5 61V130M532.5 440V484" stroke="#9b9b96" stroke-width="1" fill="none" opacity=".55"/>
<path d="M0.5 0V484" stroke="#777771" stroke-width="1"/><path d="M1.5 0V484" stroke="#8b8b85" stroke-width="1"/>
<path fill="none" stroke="#3a3a3a" stroke-width="1.1" stroke-linejoin="round" d="M544.4 0.0 L546.2 4.7 L546.8 9.8 L549.6 12.4 L549.5 16.5 L551.7 19.5 L553.3 24.4 L551.7 29.2 L550.2 32.4 L549.5 35.9 L547.6 39.0 L546.8 42.8 L543.3 44.4 L541.1 47.1 L544.5 49.5 L545.1 53.5 L546.8 56.9 L546.0 61.8 L550.4 63.8 L552.5 68.2 L555.2 71.0 L554.9 74.8 L557.2 77.8 L559.0 81.2 L555.9 84.8 L554.9 89.4 L551.0 92.3 L546.0 92.6 L544.5 97.2 L541.1 100.8 L539.1 103.8 L536.4 106.5 L536.2 110.5 L538.7 113.9 L542.0 116.7 L544.4 120.2 L547.6 124.0 M455.2 28.7 L456.5 32.6 L460.6 34.1 L464.4 32.0 L468.4 32.1 L470.9 35.2 L477.4 33.9 L482.6 31.3 L486.5 28.1 L487.9 24.2 L494.4 22.8 L498.0 23.2 L500.9 20.9 L504.8 24.8 L507.8 22.8 L511.4 22.2 L514.6 24.2 L515.3 28.1 L518.8 29.3 L520.5 32.6 L525.0 30.9 L529.6 32.0 L533.2 33.0 L536.2 35.2 L540.7 38.5 L538.8 44.4 L536.9 48.1 L537.5 52.2 L538.8 57.4 L542.5 58.6 L544.7 62.0 L547.9 64.0 M546.0 92.6 L548.0 96.2 L550.9 99.1 L552.2 103.1 L552.5 107.2 L555.6 109.8 L559.0 112.1 L561.4 115.9 L560.6 120.2 L557.4 124.0 M422.5 43.9 L426.1 46.2 L427.8 49.8 L429.0 53.6 L432.7 56.7 L437.1 58.5 L440.6 61.6 L443.6 65.0 L447.6 65.4 L451.1 67.5 L455.0 68.2 L457.3 70.8 L459.9 73.2 L461.5 76.4 L464.0 80.4 L468.0 82.9 L472.9 83.2 L477.8 82.1 L480.9 84.3 L482.6 87.8 L483.2 92.7 L484.2 97.5 L487.5 98.7 L490.3 101.0 L494.0 100.8 L497.7 99.6 L500.1 96.3 L503.8 95.1 L507.0 97.5 L504.4 102.1 L505.4 107.2 L508.8 108.7 L510.2 112.1 L515.2 112.6 L520.0 113.8 M520.0 113.8 L522.9 115.8 L526.9 114.7 L529.8 117.0 L533.0 113.7 L536.2 110.5 M520.0 125.6 L526.5 124.0 L531.7 123.1 L536.2 125.6 L541.1 124.0 M547.6 124.0 L550.9 125.6 L553.9 127.3 L557.1 128.7 L560.6 128.9 L562.4 131.9 L563.5 135.4 L567.3 137.0 L568.8 140.2 L570.6 143.6 L573.6 145.9 L577.7 145.9 L581.8 145.1 L586.6 148.4 L590.7 147.9 L594.8 146.8 L598.1 149.1 L601.2 151.6 L605.8 154.1 L611.0 154.1 L614.4 156.5 L618.6 155.6 L622.4 156.5 L619.4 159.4 L617.5 163.0 L616.6 166.8 L612.6 167.9 L611.0 171.1 L608.5 174.9 L606.9 179.2 L604.3 183.2 L604.1 187.7 L604.5 192.2 L604.2 196.8 L602.8 201.0 L601.2 205.2 L599.5 209.4 L600.8 214.4 L598.0 218.2 L599.0 223.1 L599.6 228.0 M599.6 228.0 L603.6 227.3 L607.4 227.6 L611.0 229.6 L613.7 227.0 L617.8 228.4 L620.8 226.4 L624.5 224.2 L628.9 224.8 L630.5 219.9 L633.3 217.4 L637.0 216.6 L639.7 218.8 L641.9 221.5 L645.7 223.7 L650.0 223.1 L654.9 221.5 M672.8 229.6 L676.0 228.0 L682.5 229.6 L686.3 232.9 L687.4 237.8 L692.2 236.7 L697.1 236.1 L698.1 232.1 L698.8 228.0 L703.4 230.2 L708.5 229.6 L711.1 232.8 L714.2 235.1 L718.2 236.1 L723.0 234.5 L728.0 234.5 L731.7 232.6 L735.4 230.8 L739.4 229.6 L743.6 229.9 L747.4 229.1 L750.8 226.4 L753.4 223.6 L756.7 222.0 L760.5 221.5 L764.8 220.5 L769.2 220.5 L773.5 221.5 L776.8 223.1 L780.0 224.8 M672.8 230.4 L671.1 236.1 L669.2 240.0 L668.7 244.4 L666.2 248.0 M599.6 228.0 L596.8 231.8 L592.2 232.6 L588.2 234.5 L581.8 232.9 L579.7 237.2 L576.9 241.0 L576.6 244.5 L576.9 248.0 M841.8 0.0 L840.9 4.4 L843.4 8.1 L844.3 12.1 L846.6 15.4 L849.8 18.3 L853.1 21.1 L853.8 24.5 L854.7 27.8 L856.4 30.9 L857.5 34.9 L853.8 38.2 L854.8 42.2 L852.6 45.7 L851.2 49.4 L851.5 53.6 L846.6 56.9 L842.6 55.2 L840.9 51.2 M780.0 78.0 L786.5 79.6 L790.0 77.7 L791.6 73.9 L794.6 71.5 L797.7 69.5 L800.5 66.9 L804.4 66.6 L808.7 64.6 L812.5 61.8 L814.8 58.2 L818.1 56.0 L822.2 55.2 L825.7 52.9 L829.4 51.3 L833.6 51.2 L835.2 52.8 M851.5 53.6 L855.6 53.6 L856.4 47.1 L860.1 46.9 L863.7 47.9 L867.3 51.7 L867.8 56.9 L871.8 56.8 L874.8 58.9 L877.5 61.8 L881.2 61.4 L884.2 63.4 L887.2 65.0 L890.5 69.1 L893.8 66.6 L897.2 64.4 L901.1 65.8 L904.3 70.7 L900.2 75.6 L897.0 78.8 L899.3 82.7 L903.5 84.5 L905.3 87.5 L908.9 89.1 L910.0 92.6 L913.2 95.9 L915.9 92.7 L919.8 91.0 L924.6 88.6 L923.2 85.0 L923.0 81.2 L920.6 78.0 L924.2 78.6 L928.0 78.8 L931.1 81.2 L932.6 84.6 L936.0 86.1 L939.7 88.8 L944.1 87.8 L947.4 87.8 L945.8 93.4 L949.1 97.0 L952.2 100.8 L958.8 99.1 L962.0 100.7 L965.2 102.4 L969.2 102.6 L971.8 105.6 L977.4 106.4 L980.1 109.6 L979.9 113.8 L983.5 116.6 L986.4 120.2 L987.2 124.0 M755.6 84.5 L758.8 87.2 L760.5 91.0 L761.9 95.0 L765.4 97.5 L767.7 100.3 L769.3 103.4 L768.6 107.2 L767.7 112.4 L770.2 117.0 L771.8 120.5 L773.5 124.0 M755.6 84.5 L759.0 82.1 L763.3 82.5 L767.0 81.2 L769.6 78.3 L773.5 78.9 L777.4 79.3 L780.0 76.4 M780.0 136.2 L786.5 137.8 L787.9 141.4 L790.8 143.6 L794.5 145.1 L796.2 148.4 L799.4 150.4 L802.8 152.3 L804.1 156.5 L807.6 158.1 L811.2 161.5 L814.9 164.6 L816.6 168.0 L820.3 169.6 L822.2 172.8 L825.9 173.1 L828.3 176.6 L832.0 176.8 L836.9 173.6 L840.6 176.2 L845.0 175.2 L847.9 171.6 L848.2 167.1 L853.9 165.4 L855.4 161.7 L855.7 157.9 L854.8 154.1 L861.2 155.7 L865.9 157.8 L871.0 158.1 L874.6 158.5 L877.5 160.9 L880.8 162.2 L884.8 163.3 L889.0 163.8 L892.1 167.1 L896.0 165.5 L899.8 166.8 L903.5 167.9 L908.4 164.6 L912.1 165.9 L914.9 168.7 L917.9 170.6 L921.4 171.1 L925.3 168.4 L926.2 163.8 L929.4 162.4 L932.8 161.4 L937.4 163.8 L942.5 163.0 L946.5 163.4 L949.7 161.9 L952.2 158.9 L954.3 156.1 L957.1 154.1 L960.0 151.8 L963.6 151.6 L963.1 147.7 L963.6 143.9 L965.2 140.2 L968.0 137.6 L971.8 137.0 L974.3 134.3 L977.3 131.9 L978.2 128.1 L982.1 129.1 L985.8 127.4 L989.6 127.2 L991.2 132.1 L994.8 130.2 L997.8 127.2 L1002.2 126.7 L1005.9 124.0 M1010.8 124.0 L1014.5 127.3 L1015.6 132.1 L1016.7 136.2 L1017.4 140.3 L1020.5 143.5 L1026.2 140.2 M814.9 164.6 L813.5 169.4 L814.1 174.4 L810.0 175.1 L806.6 177.7 L802.8 179.2 L802.8 182.9 L799.5 185.4 L799.5 189.0 L796.0 191.2 L791.5 191.2 L788.1 193.9 L783.3 194.3 L780.0 197.9 M780.0 203.6 L782.8 206.6 L784.9 210.1 L786.4 213.2 L787.3 216.6 L786.9 221.2 L789.8 224.8 L787.7 228.6 L787.3 232.9 L783.1 232.4 L780.0 229.6 M921.4 171.1 L923.6 174.9 L923.0 179.2 L921.7 184.0 L918.1 187.4 L919.3 191.5 L923.0 193.9 L923.5 198.4 L926.2 202.0 L927.9 206.9 L927.5 210.7 L924.6 213.4 L924.2 217.7 L926.2 221.5 L921.2 220.1 L916.5 222.3 L913.5 220.5 L910.0 219.9 L904.3 223.1 L910.0 226.4 L913.2 231.2 L910.3 234.1 L906.8 236.1 L906.0 240.1 L907.1 244.2 L905.1 248.0 M927.9 206.9 L932.3 205.9 L936.0 208.5 L938.0 213.0 L942.5 215.0 L945.5 216.9 L949.0 217.8 L952.2 219.1 L955.8 220.9 L959.6 219.2 L963.1 221.1 L966.9 219.9 L970.6 220.6 L973.9 217.8 L977.5 217.5 L981.1 217.1 L984.8 217.4 L987.2 215.0 L985.0 212.1 L984.8 208.5 L987.4 206.3 L989.6 203.6 L993.1 201.9 L996.9 201.7 L1000.3 199.8 L1004.2 200.4 L1008.4 199.5 L1010.4 195.6 L1014.0 193.9 L1017.3 195.4 L1020.5 197.1 L1026.2 198.8 M573.6 248.0 L570.2 250.5 L566.1 252.2 L563.9 256.1 L562.5 259.5 L559.2 261.9 L559.0 265.9 L556.8 269.1 L554.6 272.3 L552.5 275.6 L550.8 278.8 L550.9 282.9 L547.6 285.4 M573.6 287.0 L573.9 291.9 L573.6 296.8 L577.1 300.2 L578.5 304.9 L581.9 308.2 L581.8 313.0 L586.0 313.3 L589.9 311.4 L593.3 309.1 L597.4 309.1 L601.2 308.1 L606.1 309.0 L611.0 308.1 L613.3 305.0 L614.8 301.3 L617.5 298.4 L620.8 295.2 L624.0 291.9 L625.8 288.7 L627.2 285.4 L630.5 287.0 L630.3 291.3 L632.1 295.1 L635.8 296.1 L637.4 299.6 L640.2 301.6 L643.5 304.3 L645.1 308.1 L646.8 314.6 L650.8 313.0 L650.0 306.5 L651.5 302.8 L655.2 300.6 L656.5 296.8 L657.6 292.4 L658.9 288.1 L659.8 283.8 L664.6 282.9 L664.5 286.8 L666.2 290.2 L672.8 291.9 L676.5 292.3 L679.2 289.5 L682.5 288.6 L683.7 292.1 L685.8 295.1 L689.0 293.5 L688.2 289.4 L687.4 285.4 L685.8 278.9 L689.0 277.3 L692.2 275.6 L694.2 278.6 L697.1 280.5 L699.6 277.2 L699.0 273.2 L698.8 269.1 L699.7 265.1 L700.4 261.0 L696.3 258.6 L692.2 262.6 L687.4 261.9 L682.5 261.0 L681.4 256.7 L677.6 254.5 L673.6 253.3 L669.5 253.7 L666.2 248.0 M700.4 264.2 L704.3 266.1 L708.5 265.1 L713.0 267.9 L718.2 267.5 L719.7 264.2 L722.8 262.2 L724.8 259.4 L728.9 260.2 L732.6 259.0 L736.1 256.9 L739.7 255.0 L743.5 254.4 L747.5 255.3 L751.2 254.3 L754.7 252.1 L758.9 252.9 L760.7 256.7 L760.5 261.0 L763.9 262.7 L764.3 266.8 L767.0 269.1 L769.6 272.4 L773.5 274.0 L780.0 274.8 M581.8 313.0 L577.8 313.3 L575.2 316.2 L575.2 322.8 L578.7 325.2 L580.1 329.2 L581.8 335.8 L586.6 337.4 L584.3 340.3 L583.4 343.9 L579.8 345.8 L576.9 348.8 L573.3 351.6 L568.8 352.0 L570.4 358.5 L572.2 361.8 L574.7 364.2 L578.5 365.0 L581.1 368.0 L581.8 372.0 M578.5 372.0 L575.3 375.4 L575.2 380.1 L578.0 384.0 L580.1 388.2 L582.6 390.7 L585.0 393.1 L588.4 396.5 L593.1 396.4 L598.0 397.6 L602.9 396.4 L603.7 402.9 L601.8 407.0 L598.0 409.4 M780.0 276.4 L783.7 276.8 L787.3 277.7 L791.1 277.7 L794.6 278.9 L798.9 278.6 L802.9 279.8 L806.6 282.1 L810.9 282.1 L814.8 280.9 L818.2 283.5 L821.9 283.7 L825.5 284.6 L829.5 283.4 L832.9 285.1 L836.4 286.9 L840.1 287.0 L842.9 284.9 L844.5 281.4 L848.2 280.5 L851.5 277.2 L855.3 278.6 L858.8 277.4 L862.5 277.6 L865.6 273.8 L869.4 274.8 L872.9 273.3 L876.4 271.9 L880.5 274.0 L884.0 272.4 L890.5 273.2 M905.1 248.0 L906.8 254.5 L903.9 256.9 L900.2 257.8 L898.0 262.0 L893.8 264.2 L890.5 267.5 L890.5 273.2 L891.0 269.5 L892.1 265.9 L896.5 266.6 L900.2 264.2 L900.2 267.9 L903.3 270.5 L903.5 274.0 L907.0 276.5 L908.4 280.5 L904.3 278.9 L900.2 280.5 L898.6 285.4 L895.3 286.8 L892.1 288.6 L887.8 289.5 L884.0 291.9 L881.7 295.6 L877.5 296.8 L879.1 303.2 L880.4 308.3 L878.3 313.0 L874.4 314.0 L871.0 316.2 L867.9 318.9 L864.5 321.1 L868.6 324.4 L868.9 328.9 L866.1 332.5 L861.9 331.2 L858.0 333.3 L854.0 332.4 L849.9 332.5 L847.3 329.1 L843.4 327.6 L836.9 329.2 L832.0 332.5 L828.2 334.1 L824.4 331.1 L820.6 332.5 L816.3 334.1 L812.0 331.1 L807.6 332.5 M810.9 282.1 L807.7 284.7 L804.4 287.0 L800.3 291.9 L804.0 294.7 L806.8 298.4 L805.4 302.4 L804.4 306.5 L804.5 310.5 L807.6 313.0 L809.2 319.5 L813.3 323.6 M908.4 280.5 L911.4 282.3 L914.2 284.4 L915.6 287.9 L918.1 290.2 L921.7 292.4 L924.9 294.9 L927.6 297.9 L929.5 301.6 L933.4 303.1 L935.7 306.2 L937.6 309.8 L941.2 310.7 L944.5 312.3 L947.4 314.6 L951.1 317.2 L955.5 317.9 L959.3 317.1 L963.1 317.9 L966.9 317.9 L970.5 316.1 L974.4 316.2 L978.2 316.2 L983.1 312.2 L988.0 311.4 L991.1 307.4 L996.1 306.5 L1000.0 304.8 L1004.2 304.9 L1005.8 301.3 L1010.2 301.2 L1012.4 298.4 L1016.4 299.4 L1020.5 300.0 L1026.2 299.2 M988.0 311.4 L989.7 315.0 L989.2 318.9 L989.6 322.8 L990.7 327.0 L994.5 329.2 L995.2 333.6 L992.9 337.4 L994.8 340.5 L998.5 341.5 L1001.0 343.9 L1007.5 345.5 L1004.2 347.1 L1000.2 348.0 L996.1 348.8 L992.4 348.8 L989.8 351.6 L986.4 352.4 L983.1 353.6 L981.5 352.0 L977.9 350.5 L974.3 348.6 L970.1 349.6 L966.4 350.4 L962.5 348.8 L958.8 350.4 L954.0 348.8 L949.0 348.8 L944.7 348.2 L940.3 349.1 L936.0 348.8 L932.2 348.1 L928.2 347.9 L924.6 346.4 L921.4 343.9 L918.0 346.5 L913.5 345.2 L910.0 347.1 L907.3 350.5 L904.3 353.5 L900.2 355.2 L896.4 353.7 L895.8 348.9 L892.1 347.1 L888.3 344.9 L884.0 345.5 L882.2 348.5 L881.6 352.0 L883.6 356.7 L884.0 361.8 L880.8 366.6 L884.6 368.6 L887.2 372.0 M887.2 372.0 L890.0 374.2 L891.7 377.3 L893.8 380.1 L896.1 383.6 L896.1 387.7 L897.0 391.5 L899.9 393.6 L900.0 398.0 L903.5 399.6 L904.7 403.3 L908.2 404.6 L911.5 406.3 L913.2 409.4 L914.4 413.1 L918.6 413.7 L920.9 416.3 L923.0 419.1 L926.8 420.2 L928.2 423.7 L930.4 426.4 L932.8 428.9 L934.4 432.9 L936.0 437.0 L939.1 439.0 L940.3 442.4 L942.5 445.1 L946.1 446.7 L947.5 450.0 L949.0 453.2 L945.8 454.9 L949.7 455.1 L952.2 458.1 L955.2 460.0 L958.8 461.1 L960.4 464.6 L965.4 465.5 L968.5 469.5 L975.0 471.1 L976.0 467.5 L978.2 464.6 L977.9 460.6 L979.9 456.9 L980.3 452.9 L981.8 449.2 L981.5 445.1 L984.1 442.8 L986.5 440.2 L988.0 437.0 L991.2 435.4 M996.1 378.5 L995.5 382.8 L997.8 386.6 L1000.8 389.0 L1003.6 391.6 L1005.9 394.8 L1007.3 398.8 L1012.2 399.2 L1014.0 402.9 M1007.5 440.2 L1010.4 442.6 L1014.0 443.5 L1017.0 445.4 L1021.2 444.6 L1023.8 447.6 L1026.2 446.8 M975.0 471.1 L977.4 476.0 L978.3 480.6 L981.5 484.1 M1012.4 484.1 L1014.9 480.7 L1015.0 476.7 L1015.6 472.8 L1018.9 468.7 L1020.6 472.8 L1023.8 476.0 L1026.2 479.2 M290.9 441.9 L290.1 448.4 L293.5 450.3 L297.4 450.0 L301.1 449.8 L303.8 452.3 L307.1 453.2 L311.2 454.9 L315.2 456.5 L319.3 458.8 L323.6 459.8 L328.2 459.8 L331.7 463.3 L336.4 464.6 L340.0 465.3 L343.5 466.9 L347.3 466.5 L351.0 466.2 L354.9 466.4 L358.4 464.2 L362.4 464.6 L363.2 460.6 L367.0 459.3 L370.4 460.3 L373.8 462.2 L377.7 462.8 L381.7 462.9 L385.1 465.4 L390.0 469.5 L394.7 471.6 L399.8 471.1 L402.9 473.7 L406.2 476.0 L410.1 478.9 L414.4 480.9 L418.1 481.9 L421.9 482.6 L425.8 482.5 L429.0 481.1 L431.5 478.0 L435.5 478.4 L439.4 479.3 L443.2 478.8 L446.9 477.6"/>
<g font-family="Liberation Sans, Arial, sans-serif" stroke="#fff" stroke-width="1.8" stroke-linejoin="round" paint-order="stroke" style="paint-order:stroke">
<circle cx="296.5" cy="6.5" r="1.8" fill="#fff" stroke="#333" stroke-width="1.1"/>
<text transform="translate(299.9 9.5) scale(1.00 1)" font-size="8.2" font-weight="400" fill="#444">Oxford</text>
<circle cx="230.7" cy="21.1" r="1.8" fill="#fff" stroke="#333" stroke-width="1.1"/>
<text transform="translate(227.3 24.1) scale(1.00 1)" font-size="8.2" font-weight="400" fill="#444" text-anchor="end">Cardiff</text>
<circle cx="251.0" cy="22.5" r="1.8" fill="#fff" stroke="#333" stroke-width="1.1"/>
<text transform="translate(254.4 25.5) scale(1.00 1)" font-size="8.2" font-weight="400" fill="#444">Bristol</text>
<circle cx="335.0" cy="20.3" r="2.2" fill="#fff" stroke="#2a2a2a" stroke-width="1.3"/><circle cx="335.0" cy="20.3" r="1.3" fill="#2a2a2a" stroke="none"/>
<text transform="translate(338.8 24.0) scale(1.00 1)" font-size="10.3" font-weight="400" fill="#2c2c2c">Londres</text>
<text transform="translate(338.8 24.0) scale(1.00 1)" font-size="10.3" fill="#2c2c2c" stroke="#2c2c2c" stroke-width="0.25">Londres</text>
<circle cx="218.0" cy="62.5" r="1.8" fill="#fff" stroke="#333" stroke-width="1.1"/>
<text transform="translate(221.4 65.5) scale(1.00 1)" font-size="8.2" font-weight="400" fill="#444">Exeter</text>
<circle cx="275.5" cy="63.0" r="1.8" fill="#fff" stroke="#333" stroke-width="1.1"/>
<text transform="translate(278.9 66.0) scale(1.00 1)" font-size="8.2" font-weight="400" fill="#444">Bournemouth</text>
<circle cx="197.3" cy="81.5" r="1.8" fill="#fff" stroke="#333" stroke-width="1.1"/>
<text transform="translate(200.7 84.5) scale(1.00 1)" font-size="8.2" font-weight="400" fill="#444">Plymouth</text>
<circle cx="581.0" cy="22.0" r="2.2" fill="#fff" stroke="#333" stroke-width="1.1"/>
<text transform="translate(577.2 25.7) scale(1.00 1)" font-size="10.4" font-weight="400" fill="#2e2e2e" text-anchor="end">Essen</text>
<text transform="translate(577.2 25.7) scale(1.00 1)" font-size="10.4" fill="#2e2e2e" stroke="#2e2e2e" stroke-width="0.12" text-anchor="end">Essen</text>
<circle cx="596.0" cy="19.8" r="2.2" fill="#fff" stroke="#333" stroke-width="1.1"/>
<text transform="translate(599.8 23.5) scale(1.00 1)" font-size="10.4" font-weight="400" fill="#2e2e2e">Dortmund</text>
<text transform="translate(599.8 23.5) scale(1.00 1)" font-size="10.4" fill="#2e2e2e" stroke="#2e2e2e" stroke-width="0.12">Dortmund</text>
<circle cx="572.5" cy="35.4" r="2.2" fill="#fff" stroke="#333" stroke-width="1.1"/>
<text transform="translate(576.3 39.1) scale(1.00 1)" font-size="10.4" font-weight="400" fill="#2e2e2e">Düsseldorf</text>
<text transform="translate(576.3 39.1) scale(1.00 1)" font-size="10.4" fill="#2e2e2e" stroke="#2e2e2e" stroke-width="0.12">Düsseldorf</text>
<circle cx="578.5" cy="51.7" r="2.2" fill="#fff" stroke="#333" stroke-width="1.1"/>
<text transform="translate(582.3 55.4) scale(1.00 1)" font-size="10.4" font-weight="400" fill="#2e2e2e">Cologne</text>
<text transform="translate(582.3 55.4) scale(1.00 1)" font-size="10.4" fill="#2e2e2e" stroke="#2e2e2e" stroke-width="0.12">Cologne</text>
<circle cx="666.0" cy="30.4" r="1.6" fill="#fff" stroke="#333" stroke-width="1.1"/>
<text transform="translate(669.2 33.4) scale(1.00 1)" font-size="8.3" font-weight="400" fill="#686868">Kassel</text>
<circle cx="530.6" cy="67.0" r="1.6" fill="#fff" stroke="#333" stroke-width="1.1"/>
<text transform="translate(533.8 70.0) scale(1.00 1)" font-size="8.3" font-weight="400" fill="#686868">Liège</text>
<circle cx="638.6" cy="95.9" r="2.2" fill="#fff" stroke="#333" stroke-width="1.1"/>
<text transform="translate(642.4 99.6) scale(1.00 1)" font-size="10.4" font-weight="400" fill="#2e2e2e">Francfort-sur-le-Main</text>
<text transform="translate(642.4 99.6) scale(1.00 1)" font-size="10.4" fill="#2e2e2e" stroke="#2e2e2e" stroke-width="0.12">Francfort-sur-le-Main</text>
<circle cx="765.4" cy="29.6" r="2.2" fill="#fff" stroke="#333" stroke-width="1.1"/>
<text transform="translate(769.2 33.3) scale(1.00 1)" font-size="10.4" font-weight="400" fill="#2e2e2e">Leipzig</text>
<text transform="translate(769.2 33.3) scale(1.00 1)" font-size="10.4" fill="#2e2e2e" stroke="#2e2e2e" stroke-width="0.12">Leipzig</text>
<circle cx="812.2" cy="45.0" r="2.2" fill="#fff" stroke="#333" stroke-width="1.1"/>
<text transform="translate(816.0 48.7) scale(1.00 1)" font-size="10.4" font-weight="400" fill="#2e2e2e">Dresde</text>
<text transform="translate(816.0 48.7) scale(1.00 1)" font-size="10.4" fill="#2e2e2e" stroke="#2e2e2e" stroke-width="0.12">Dresde</text>
<circle cx="925.1" cy="41.9" r="2.2" fill="#fff" stroke="#333" stroke-width="1.1"/>
<text transform="translate(928.9 45.6) scale(1.00 1)" font-size="10.4" font-weight="400" fill="#2e2e2e">Wrocław</text>
<text transform="translate(928.9 45.6) scale(1.00 1)" font-size="10.4" fill="#2e2e2e" stroke="#2e2e2e" stroke-width="0.12">Wrocław</text>
<circle cx="997.4" cy="57.7" r="2.2" fill="#fff" stroke="#333" stroke-width="1.1"/>
<text transform="translate(993.6 61.4) scale(1.00 1)" font-size="10.4" font-weight="400" fill="#2e2e2e" text-anchor="end">Częstochowa</text>
<text transform="translate(993.6 61.4) scale(1.00 1)" font-size="10.4" fill="#2e2e2e" stroke="#2e2e2e" stroke-width="0.12" text-anchor="end">Częstochowa</text>
<circle cx="993.7" cy="87.7" r="2.2" fill="#fff" stroke="#333" stroke-width="1.1"/>
<text transform="translate(989.9 91.4) scale(1.00 1)" font-size="10.4" font-weight="400" fill="#2e2e2e" text-anchor="end">Katowice</text>
<text transform="translate(989.9 91.4) scale(1.00 1)" font-size="10.4" fill="#2e2e2e" stroke="#2e2e2e" stroke-width="0.12" text-anchor="end">Katowice</text>
<circle cx="836.0" cy="97.8" r="2.2" fill="#fff" stroke="#2a2a2a" stroke-width="1.3"/><circle cx="836.0" cy="97.8" r="1.3" fill="#2a2a2a" stroke="none"/>
<text transform="translate(839.8 101.5) scale(1.00 1)" font-size="10.4" font-weight="400" fill="#333">Prague</text>
<circle cx="799.5" cy="115.7" r="1.6" fill="#fff" stroke="#333" stroke-width="1.1"/>
<text transform="translate(802.7 118.7) scale(1.00 1)" font-size="8.3" font-weight="400" fill="#686868">Plzeň</text>
<circle cx="968.0" cy="111.6" r="2.2" fill="#fff" stroke="#333" stroke-width="1.1"/>
<text transform="translate(964.2 115.3) scale(1.00 1)" font-size="10.4" font-weight="400" fill="#2e2e2e" text-anchor="end">Ostrava</text>
<text transform="translate(964.2 115.3) scale(1.00 1)" font-size="10.4" fill="#2e2e2e" stroke="#2e2e2e" stroke-width="0.12" text-anchor="end">Ostrava</text>
<circle cx="994.8" cy="111.3" r="1.6" fill="#fff" stroke="#333" stroke-width="1.1"/>
<text transform="translate(998.0 114.3) scale(1.00 1)" font-size="8.3" font-weight="400" fill="#686868">Bielsko-Biała</text>
<circle cx="1008.8" cy="6.2" r="2.2" fill="#fff" stroke="#333" stroke-width="1.1"/>
<text transform="translate(1012.6 9.9) scale(1.00 1)" font-size="10.4" font-weight="400" fill="#2e2e2e">Łódź</text>
<text transform="translate(1012.6 9.9) scale(1.00 1)" font-size="10.4" fill="#2e2e2e" stroke="#2e2e2e" stroke-width="0.12">Łódź</text>
<circle cx="490.8" cy="36.2" r="2.2" fill="#fff" stroke="#333" stroke-width="1.1"/>
<text transform="translate(494.6 39.9) scale(1.00 1)" font-size="10.4" font-weight="400" fill="#2e2e2e">Anvers</text>
<text transform="translate(494.6 39.9) scale(1.00 1)" font-size="10.4" fill="#2e2e2e" stroke="#2e2e2e" stroke-width="0.12">Anvers</text>
<circle cx="489.0" cy="56.4" r="2.2" fill="#fff" stroke="#2a2a2a" stroke-width="1.3"/><circle cx="489.0" cy="56.4" r="1.3" fill="#2a2a2a" stroke="none"/>
<text transform="translate(492.8 60.1) scale(1.00 1)" font-size="10.3" font-weight="400" fill="#2c2c2c">Bruxelles</text>
<text transform="translate(492.8 60.1) scale(1.00 1)" font-size="10.3" fill="#2c2c2c" stroke="#2c2c2c" stroke-width="0.25">Bruxelles</text>
<circle cx="326.6" cy="145.1" r="1.8" fill="#fff" stroke="#333" stroke-width="1.1"/>
<text transform="translate(330.0 148.1) scale(1.00 1)" font-size="8.2" font-weight="400" fill="#444">Caen</text>
<circle cx="380.6" cy="131.8" r="1.6" fill="#fff" stroke="#333" stroke-width="1.1"/>
<text transform="translate(383.8 134.8) scale(1.00 1)" font-size="8.3" font-weight="400" fill="#686868">Rouen</text>
<circle cx="412.7" cy="164.3" r="1.8" fill="#fff" stroke="#333" stroke-width="1.1"/>
<text transform="translate(409.3 167.3) scale(1.00 1)" font-size="8.2" font-weight="400" fill="#444" text-anchor="end">Versailles</text>
<circle cx="420.0" cy="162.2" r="2.4" fill="#fff" stroke="#2a2a2a" stroke-width="1.3"/><circle cx="420.0" cy="162.2" r="1.3" fill="#2a2a2a" stroke="none"/>
<text transform="translate(424.0 166.3) scale(1.00 1)" font-size="11.4" font-weight="400" fill="#222">Paris</text>
<text transform="translate(424.0 166.3) scale(1.00 1)" font-size="11.4" fill="#222" stroke="#222" stroke-width="0.25">Paris</text>
<circle cx="270.1" cy="172.7" r="1.8" fill="#fff" stroke="#333" stroke-width="1.1"/>
<text transform="translate(273.5 175.7) scale(1.00 1)" font-size="8.2" font-weight="400" fill="#444">Saint-Malo</text>
<circle cx="282.3" cy="199.9" r="1.8" fill="#fff" stroke="#333" stroke-width="1.1"/>
<text transform="translate(285.7 202.9) scale(1.00 1)" font-size="8.2" font-weight="400" fill="#444">Rennes</text>
<circle cx="346.1" cy="206.4" r="1.8" fill="#fff" stroke="#333" stroke-width="1.1"/>
<text transform="translate(349.5 209.4) scale(1.00 1)" font-size="8.2" font-weight="400" fill="#444">Le Mans</text>
<circle cx="320.4" cy="233.4" r="1.8" fill="#fff" stroke="#333" stroke-width="1.1"/>
<text transform="translate(323.8 236.4) scale(1.00 1)" font-size="8.2" font-weight="400" fill="#444">Angers</text>
<circle cx="362.7" cy="237.7" r="1.8" fill="#fff" stroke="#333" stroke-width="1.1"/>
<text transform="translate(366.1 240.7) scale(1.00 1)" font-size="8.2" font-weight="400" fill="#444">Tours</text>
<circle cx="287.1" cy="245.4" r="2.2" fill="#fff" stroke="#333" stroke-width="1.1"/>
<text transform="translate(290.9 249.1) scale(1.00 1)" font-size="10.3" font-weight="400" fill="#2c2c2c">Nantes</text>
<text transform="translate(290.9 249.1) scale(1.00 1)" font-size="10.3" fill="#2c2c2c" stroke="#2c2c2c" stroke-width="0.25">Nantes</text>
<circle cx="185.2" cy="186.5" r="1.8" fill="#fff" stroke="#333" stroke-width="1.1"/>
<text transform="translate(188.6 189.5) scale(1.00 1)" font-size="8.2" font-weight="400" fill="#444">Brest</text>
<circle cx="199.0" cy="206.0" r="1.8" fill="#fff" stroke="#333" stroke-width="1.1"/>
<text transform="translate(202.4 209.0) scale(1.00 1)" font-size="8.2" font-weight="400" fill="#444">Quimper</text>
<circle cx="223.9" cy="219.5" r="1.8" fill="#fff" stroke="#333" stroke-width="1.1"/>
<text transform="translate(227.3 222.5) scale(1.00 1)" font-size="8.2" font-weight="400" fill="#444">Lorient</text>
<circle cx="630.5" cy="129.4" r="1.6" fill="#fff" stroke="#333" stroke-width="1.1"/>
<text transform="translate(633.7 132.4) scale(1.00 1)" font-size="8.3" font-weight="400" fill="#686868">Mannheim</text>
<circle cx="628.1" cy="154.1" r="1.6" fill="#fff" stroke="#333" stroke-width="1.1"/>
<text transform="translate(631.3 157.1) scale(1.00 1)" font-size="8.3" font-weight="400" fill="#686868">Karlsruhe</text>
<circle cx="721.2" cy="130.5" r="2.2" fill="#fff" stroke="#333" stroke-width="1.1"/>
<text transform="translate(725.0 134.2) scale(1.00 1)" font-size="10.3" font-weight="400" fill="#2c2c2c">Nuremberg</text>
<text transform="translate(725.0 134.2) scale(1.00 1)" font-size="10.3" fill="#2c2c2c" stroke="#2c2c2c" stroke-width="0.25">Nuremberg</text>
<circle cx="655.2" cy="166.6" r="2.2" fill="#fff" stroke="#333" stroke-width="1.1"/>
<text transform="translate(659.0 170.3) scale(1.00 1)" font-size="10.3" font-weight="400" fill="#2c2c2c">Stuttgart</text>
<text transform="translate(659.0 170.3) scale(1.00 1)" font-size="10.3" fill="#2c2c2c" stroke="#2c2c2c" stroke-width="0.25">Stuttgart</text>
<circle cx="755.9" cy="154.1" r="1.6" fill="#fff" stroke="#333" stroke-width="1.1"/>
<text transform="translate(759.1 157.1) scale(1.00 1)" font-size="8.3" font-weight="400" fill="#686868">Ratisbonne</text>
<circle cx="605.6" cy="176.8" r="1.8" fill="#fff" stroke="#333" stroke-width="1.1"/>
<text transform="translate(602.2 179.8) scale(1.00 1)" font-size="8.2" font-weight="400" fill="#444" text-anchor="end">Strasbourg</text>
<circle cx="714.5" cy="187.0" r="1.6" fill="#fff" stroke="#333" stroke-width="1.1"/>
<text transform="translate(717.7 190.0) scale(1.00 1)" font-size="8.3" font-weight="400" fill="#686868">Augsbourg</text>
<circle cx="738.6" cy="199.6" r="2.2" fill="#fff" stroke="#333" stroke-width="1.1"/>
<text transform="translate(742.4 203.3) scale(1.00 1)" font-size="10.3" font-weight="400" fill="#2c2c2c">Munich</text>
<text transform="translate(742.4 203.3) scale(1.00 1)" font-size="10.3" fill="#2c2c2c" stroke="#2c2c2c" stroke-width="0.25">Munich</text>
<circle cx="608.9" cy="206.1" r="1.8" fill="#fff" stroke="#333" stroke-width="1.1"/>
<text transform="translate(612.3 209.1) scale(1.00 1)" font-size="8.2" font-weight="400" fill="#444">Fribourg-en-Brisgau</text>
<circle cx="788.4" cy="216.6" r="1.6" fill="#fff" stroke="#333" stroke-width="1.1"/>
<text transform="translate(785.2 219.6) scale(1.00 1)" font-size="8.3" font-weight="400" fill="#686868" text-anchor="end">Salzbourg</text>
<circle cx="600.8" cy="228.8" r="1.8" fill="#fff" stroke="#333" stroke-width="1.1"/>
<text transform="translate(597.4 231.8) scale(1.00 1)" font-size="8.2" font-weight="400" fill="#444" text-anchor="end">Bâle</text>
<circle cx="632.9" cy="237.7" r="2.2" fill="#fff" stroke="#333" stroke-width="1.1"/>
<text transform="translate(636.7 241.4) scale(1.00 1)" font-size="10.3" font-weight="400" fill="#2c2c2c">Zurich</text>
<text transform="translate(636.7 241.4) scale(1.00 1)" font-size="10.3" fill="#2c2c2c" stroke="#2c2c2c" stroke-width="0.25">Zurich</text>
<circle cx="731.2" cy="243.9" r="1.6" fill="#fff" stroke="#333" stroke-width="1.1"/>
<text transform="translate(734.4 246.9) scale(1.00 1)" font-size="8.3" font-weight="400" fill="#686868">Innsbruck</text>
<circle cx="910.3" cy="144.6" r="2.2" fill="#fff" stroke="#333" stroke-width="1.1"/>
<text transform="translate(914.1 148.3) scale(1.00 1)" font-size="10.4" font-weight="400" fill="#2e2e2e">Brno</text>
<text transform="translate(914.1 148.3) scale(1.00 1)" font-size="10.4" fill="#2e2e2e" stroke="#2e2e2e" stroke-width="0.12">Brno</text>
<circle cx="830.7" cy="190.3" r="1.6" fill="#fff" stroke="#333" stroke-width="1.1"/>
<text transform="translate(833.9 193.3) scale(1.00 1)" font-size="8.3" font-weight="400" fill="#686868">Linz</text>
<circle cx="902.2" cy="195.5" r="2.2" fill="#fff" stroke="#2a2a2a" stroke-width="1.3"/><circle cx="902.2" cy="195.5" r="1.3" fill="#2a2a2a" stroke="none"/>
<text transform="translate(906.0 199.2) scale(1.00 1)" font-size="10.4" font-weight="400" fill="#333">Vienne</text>
<circle cx="994.8" cy="231.7" r="2.2" fill="#fff" stroke="#2a2a2a" stroke-width="1.3"/><circle cx="994.8" cy="231.7" r="1.3" fill="#2a2a2a" stroke="none"/>
<text transform="translate(998.6 235.4) scale(1.00 1)" font-size="10.4" font-weight="400" fill="#333">Budapest</text>
<circle cx="351.8" cy="278.5" r="1.8" fill="#fff" stroke="#333" stroke-width="1.1"/>
<text transform="translate(355.2 281.5) scale(1.00 1)" font-size="8.2" font-weight="400" fill="#444">Poitiers</text>
<circle cx="299.8" cy="299.7" r="1.8" fill="#fff" stroke="#333" stroke-width="1.1"/>
<text transform="translate(303.2 302.7) scale(1.00 1)" font-size="8.2" font-weight="400" fill="#444">La Rochelle</text>
<circle cx="444.9" cy="317.5" r="1.8" fill="#fff" stroke="#333" stroke-width="1.1"/>
<text transform="translate(441.5 320.5) scale(1.00 1)" font-size="8.2" font-weight="400" fill="#444" text-anchor="end">Clermont-Ferrand</text>
<circle cx="505.7" cy="318.7" r="2.2" fill="#fff" stroke="#333" stroke-width="1.1"/>
<text transform="translate(509.5 322.4) scale(1.00 1)" font-size="10.3" font-weight="400" fill="#2c2c2c">Lyon</text>
<text transform="translate(509.5 322.4) scale(1.00 1)" font-size="10.3" fill="#2c2c2c" stroke="#2c2c2c" stroke-width="0.25">Lyon</text>
<circle cx="319.8" cy="363.9" r="1.8" fill="#fff" stroke="#333" stroke-width="1.1"/>
<text transform="translate(323.2 366.9) scale(1.00 1)" font-size="8.2" font-weight="400" fill="#444">Bordeaux</text>
<circle cx="567.4" cy="281.8" r="1.6" fill="#fff" stroke="#333" stroke-width="1.1"/>
<text transform="translate(570.6 284.8) scale(1.00 1)" font-size="8.3" font-weight="400" fill="#686868">Lausanne</text>
<circle cx="547.5" cy="297.0" r="2.2" fill="#fff" stroke="#333" stroke-width="1.1"/>
<text transform="translate(543.7 300.7) scale(1.00 1)" font-size="10.3" font-weight="400" fill="#2c2c2c" text-anchor="end">Genève</text>
<text transform="translate(543.7 300.7) scale(1.00 1)" font-size="10.3" fill="#2c2c2c" stroke="#2c2c2c" stroke-width="0.25" text-anchor="end">Genève</text>
<circle cx="513.7" cy="240.7" r="1.8" fill="#fff" stroke="#333" stroke-width="1.1"/>
<text transform="translate(517.1 243.7) scale(1.00 1)" font-size="8.2" font-weight="400" fill="#444">Dijon</text>
<circle cx="536.2" cy="347.1" r="1.6" fill="#fff" stroke="#333" stroke-width="1.1"/>
<text transform="translate(539.4 350.1) scale(1.00 1)" font-size="8.3" font-weight="400" fill="#686868">Grenoble</text>
<circle cx="603.7" cy="352.8" r="2.2" fill="#fff" stroke="#333" stroke-width="1.1"/>
<text transform="translate(607.5 356.5) scale(1.00 1)" font-size="10.3" font-weight="400" fill="#2c2c2c">Turin</text>
<text transform="translate(607.5 356.5) scale(1.00 1)" font-size="10.3" fill="#2c2c2c" stroke="#2c2c2c" stroke-width="0.25">Turin</text>
<circle cx="655.2" cy="332.8" r="2.2" fill="#fff" stroke="#333" stroke-width="1.1"/>
<text transform="translate(659.0 336.5) scale(1.00 1)" font-size="10.3" font-weight="400" fill="#2c2c2c">Milan</text>
<text transform="translate(659.0 336.5) scale(1.00 1)" font-size="10.3" fill="#2c2c2c" stroke="#2c2c2c" stroke-width="0.25">Milan</text>
<circle cx="671.9" cy="322.3" r="1.6" fill="#fff" stroke="#333" stroke-width="1.1"/>
<text transform="translate(675.1 325.3) scale(1.00 1)" font-size="8.3" font-weight="400" fill="#686868">Bergame</text>
<circle cx="717.4" cy="334.4" r="1.6" fill="#fff" stroke="#333" stroke-width="1.1"/>
<text transform="translate(720.6 337.4) scale(1.00 1)" font-size="8.3" font-weight="400" fill="#686868">Vérone</text>
<circle cx="763.3" cy="334.6" r="2.2" fill="#fff" stroke="#333" stroke-width="1.1"/>
<text transform="translate(767.1 338.3) scale(1.00 1)" font-size="10.3" font-weight="400" fill="#2c2c2c">Venise</text>
<text transform="translate(767.1 338.3) scale(1.00 1)" font-size="10.3" fill="#2c2c2c" stroke="#2c2c2c" stroke-width="0.25">Venise</text>
<circle cx="694.7" cy="365.0" r="1.6" fill="#fff" stroke="#333" stroke-width="1.1"/>
<text transform="translate(691.5 368.0) scale(1.00 1)" font-size="8.3" font-weight="400" fill="#686868" text-anchor="end">Parme</text>
<circle cx="870.2" cy="254.5" r="2.2" fill="#fff" stroke="#333" stroke-width="1.1"/>
<text transform="translate(874.0 258.2) scale(1.00 1)" font-size="10.4" font-weight="400" fill="#2e2e2e">Graz</text>
<text transform="translate(874.0 258.2) scale(1.00 1)" font-size="10.4" fill="#2e2e2e" stroke="#2e2e2e" stroke-width="0.12">Graz</text>
<circle cx="888.9" cy="316.2" r="2.2" fill="#fff" stroke="#2a2a2a" stroke-width="1.3"/><circle cx="888.9" cy="316.2" r="1.3" fill="#2a2a2a" stroke="none"/>
<text transform="translate(892.7 319.9) scale(1.00 1)" font-size="10.4" font-weight="400" fill="#333">Zagreb</text>
<circle cx="813.3" cy="324.4" r="1.6" fill="#fff" stroke="#333" stroke-width="1.1"/>
<text transform="translate(816.5 327.4) scale(1.00 1)" font-size="8.3" font-weight="400" fill="#686868">Trieste</text>
<circle cx="815.4" cy="362.2" r="1.6" fill="#fff" stroke="#333" stroke-width="1.1"/>
<text transform="translate(812.2 365.2) scale(1.00 1)" font-size="8.3" font-weight="400" fill="#686868" text-anchor="end">Pula</text>
<circle cx="50.4" cy="434.6" r="1.8" fill="#fff" stroke="#333" stroke-width="1.1"/>
<text transform="translate(53.8 437.6) scale(1.00 1)" font-size="8.2" font-weight="400" fill="#444">La Corogne</text>
<circle cx="138.9" cy="435.0" r="1.8" fill="#fff" stroke="#333" stroke-width="1.1"/>
<text transform="translate(135.5 438.0) scale(1.00 1)" font-size="8.2" font-weight="400" fill="#444" text-anchor="end">Oviedo</text>
<circle cx="144.6" cy="426.4" r="1.8" fill="#fff" stroke="#333" stroke-width="1.1"/>
<text transform="translate(148.0 429.4) scale(1.00 1)" font-size="8.2" font-weight="400" fill="#444">Gijón</text>
<circle cx="238.9" cy="439.0" r="2.2" fill="#fff" stroke="#333" stroke-width="1.1"/>
<text transform="translate(235.1 442.7) scale(1.00 1)" font-size="10.3" font-weight="400" fill="#2c2c2c" text-anchor="end">Bilbao</text>
<text transform="translate(235.1 442.7) scale(1.00 1)" font-size="10.3" fill="#2c2c2c" stroke="#2c2c2c" stroke-width="0.25" text-anchor="end">Bilbao</text>
<circle cx="79.6" cy="451.6" r="1.8" fill="#fff" stroke="#333" stroke-width="1.1"/>
<text transform="translate(83.0 454.6) scale(1.00 1)" font-size="8.2" font-weight="400" fill="#444">Lugo</text>
<circle cx="46.0" cy="457.3" r="1.8" fill="#fff" stroke="#333" stroke-width="1.1"/>
<text transform="translate(42.6 460.3) scale(1.00 1)" font-size="8.2" font-weight="400" fill="#444" text-anchor="end">Compostelle</text>
<circle cx="247.5" cy="458.4" r="1.8" fill="#fff" stroke="#333" stroke-width="1.1"/>
<text transform="translate(244.1 461.4) scale(1.00 1)" font-size="8.2" font-weight="400" fill="#444" text-anchor="end">Vitoria-Gasteiz</text>
<circle cx="147.9" cy="470.6" r="1.8" fill="#fff" stroke="#333" stroke-width="1.1"/>
<text transform="translate(151.3 473.6) scale(1.00 1)" font-size="8.2" font-weight="400" fill="#444">León</text>
<circle cx="212.5" cy="481.7" r="1.8" fill="#fff" stroke="#333" stroke-width="1.1"/>
<text transform="translate(215.9 484.7) scale(1.00 1)" font-size="8.2" font-weight="400" fill="#444">Burgos</text>
<circle cx="271.4" cy="436.5" r="1.8" fill="#fff" stroke="#333" stroke-width="1.1"/>
<text transform="translate(274.8 439.5) scale(1.00 1)" font-size="8.2" font-weight="400" fill="#444">Saint-Sébastien</text>
<circle cx="283.2" cy="460.9" r="1.8" fill="#fff" stroke="#333" stroke-width="1.1"/>
<text transform="translate(286.6 463.9) scale(1.00 1)" font-size="8.2" font-weight="400" fill="#444">Pampelune</text>
<circle cx="388.9" cy="423.7" r="2.2" fill="#fff" stroke="#333" stroke-width="1.1"/>
<text transform="translate(392.7 427.4) scale(1.00 1)" font-size="10.3" font-weight="400" fill="#2c2c2c">Toulouse</text>
<text transform="translate(392.7 427.4) scale(1.00 1)" font-size="10.3" fill="#2c2c2c" stroke="#2c2c2c" stroke-width="0.25">Toulouse</text>
<circle cx="420.5" cy="441.9" r="1.8" fill="#fff" stroke="#333" stroke-width="1.1"/>
<text transform="translate(423.9 444.9) scale(1.00 1)" font-size="8.2" font-weight="400" fill="#444">Carcassonne</text>
<circle cx="439.2" cy="466.7" r="1.8" fill="#fff" stroke="#333" stroke-width="1.1"/>
<text transform="translate(442.6 469.7) scale(1.00 1)" font-size="8.2" font-weight="400" fill="#444">Perpignan</text>
<circle cx="472.9" cy="423.7" r="2.2" fill="#fff" stroke="#333" stroke-width="1.1"/>
<text transform="translate(476.7 427.4) scale(1.00 1)" font-size="10.3" font-weight="400" fill="#2c2c2c">Montpellier</text>
<text transform="translate(476.7 427.4) scale(1.00 1)" font-size="10.3" fill="#2c2c2c" stroke="#2c2c2c" stroke-width="0.25">Montpellier</text>
<circle cx="505.0" cy="406.6" r="1.8" fill="#fff" stroke="#333" stroke-width="1.1"/>
<text transform="translate(508.4 409.6) scale(1.00 1)" font-size="8.2" font-weight="400" fill="#444">Avignon</text>
<circle cx="646.7" cy="384.7" r="2.2" fill="#fff" stroke="#333" stroke-width="1.1"/>
<text transform="translate(650.5 388.4) scale(1.00 1)" font-size="10.4" font-weight="400" fill="#2e2e2e">Gênes</text>
<text transform="translate(650.5 388.4) scale(1.00 1)" font-size="10.4" fill="#2e2e2e" stroke="#2e2e2e" stroke-width="0.12">Gênes</text>
<circle cx="729.9" cy="380.9" r="2.2" fill="#fff" stroke="#333" stroke-width="1.1"/>
<text transform="translate(733.7 384.6) scale(1.00 1)" font-size="10.4" font-weight="400" fill="#2e2e2e">Bologne</text>
<text transform="translate(733.7 384.6) scale(1.00 1)" font-size="10.4" fill="#2e2e2e" stroke="#2e2e2e" stroke-width="0.12">Bologne</text>
<circle cx="726.9" cy="415.5" r="2.2" fill="#fff" stroke="#333" stroke-width="1.1"/>
<text transform="translate(723.1 419.2) scale(1.00 1)" font-size="10.4" font-weight="400" fill="#2e2e2e" text-anchor="end">Florence</text>
<text transform="translate(723.1 419.2) scale(1.00 1)" font-size="10.4" fill="#2e2e2e" stroke="#2e2e2e" stroke-width="0.12" text-anchor="end">Florence</text>
<circle cx="524.4" cy="437.8" r="2.2" fill="#fff" stroke="#333" stroke-width="1.1"/>
<text transform="translate(528.2 441.5) scale(1.00 1)" font-size="10.4" font-weight="400" fill="#2e2e2e">Marseille</text>
<text transform="translate(528.2 441.5) scale(1.00 1)" font-size="10.4" fill="#2e2e2e" stroke="#2e2e2e" stroke-width="0.12">Marseille</text>
<circle cx="863.2" cy="398.3" r="1.6" fill="#fff" stroke="#333" stroke-width="1.1"/>
<text transform="translate(866.4 401.3) scale(1.00 1)" font-size="8.3" font-weight="400" fill="#686868">Zadar</text>
<circle cx="904.6" cy="427.7" r="1.8" fill="#fff" stroke="#333" stroke-width="1.1"/>
<text transform="translate(908.0 430.7) scale(1.00 1)" font-size="8.2" font-weight="400" fill="#444">Split</text>
<circle cx="925.1" cy="437.8" r="1.8" fill="#fff" stroke="#333" stroke-width="1.1"/>
<text transform="translate(921.7 440.8) scale(1.00 1)" font-size="8.2" font-weight="400" fill="#444" text-anchor="end">Makarska</text>
<circle cx="951.1" cy="435.9" r="1.8" fill="#fff" stroke="#333" stroke-width="1.1"/>
<text transform="translate(954.5 438.9) scale(1.00 1)" font-size="8.2" font-weight="400" fill="#444">Mostar</text>
<circle cx="972.6" cy="411.8" r="2.2" fill="#fff" stroke="#2a2a2a" stroke-width="1.3"/><circle cx="972.6" cy="411.8" r="1.3" fill="#2a2a2a" stroke="none"/>
<text transform="translate(976.4 415.5) scale(1.00 1)" font-size="10.4" font-weight="400" fill="#333">Sarajevo</text>
<circle cx="278.4" cy="282.5" r="1.6" fill="#fff" stroke="#333" stroke-width="1.1"/>
<text transform="translate(275.2 285.5) scale(1.00 1)" font-size="8.3" font-weight="400" fill="#686868" text-anchor="end">Les Sables-d'Olonne</text>
<circle cx="1033.5" cy="293.7" r="1.6" fill="#fff" stroke="#333" stroke-width="1.1"/>
<text transform="translate(1030.3 296.7) scale(1.00 1)" font-size="8.3" font-weight="400" fill="#686868" text-anchor="end">Szeged</text>
<circle cx="1020.0" cy="343.0" r="1.8" fill="#fff" stroke="#333" stroke-width="1.1"/>
<text transform="translate(1023.4 346.0) scale(1.00 1)" font-size="8.2" font-weight="400" fill="#444">Novi Sad</text>
<circle cx="1024.5" cy="97.8" r="2.2" fill="#fff" stroke="#333" stroke-width="1.1"/>
<text transform="translate(1028.3 101.5) scale(1.00 1)" font-size="10.4" font-weight="400" fill="#2e2e2e">Cracovie</text>
<text transform="translate(1028.3 101.5) scale(1.00 1)" font-size="10.4" fill="#2e2e2e" stroke="#2e2e2e" stroke-width="0.12">Cracovie</text>
<circle cx="1001.7" cy="478.2" r="1.8" fill="#fff" stroke="#333" stroke-width="1.1"/>
<text transform="translate(998.3 481.2) scale(1.00 1)" font-size="8.2" font-weight="400" fill="#444" text-anchor="end">Podgorica</text>
<text transform="translate(696.3 46.7) scale(.95 1)" font-size="13.4" font-weight="700" fill="#1f1f1f" text-anchor="middle">Allemagne</text>
<text transform="translate(499.0 79.7) scale(.95 1)" font-size="13.4" font-weight="700" fill="#1f1f1f" text-anchor="middle">Belgique</text>
<text transform="translate(548.0 118.7) scale(.95 1)" font-size="13.4" font-weight="700" fill="#1f1f1f" text-anchor="middle">Luxembourg</text>
<text transform="translate(859.5 122.7) scale(.95 1)" font-size="13.4" font-weight="700" fill="#1f1f1f" text-anchor="middle">Tchéquie</text>
<text transform="translate(1006.5 175.0) scale(.95 1)" font-size="13.4" font-weight="700" fill="#1f1f1f" text-anchor="middle">Slovaquie</text>
<text transform="translate(825.6 232.2) scale(.95 1)" font-size="13.4" font-weight="700" fill="#1f1f1f" text-anchor="middle">Autriche</text>
<text transform="translate(423.8 280.7) scale(.95 1)" font-size="13.4" font-weight="700" fill="#1f1f1f" text-anchor="middle">France</text>
<text transform="translate(613.0 272.5) scale(.95 1)" font-size="13.4" font-weight="700" fill="#1f1f1f" text-anchor="middle">Suisse</text>
<text transform="translate(1013.0 262.4) scale(.95 1)" font-size="13.4" font-weight="700" fill="#1f1f1f" text-anchor="middle">Hongrie</text>
<text transform="translate(843.4 309.1) scale(.95 1)" font-size="13.4" font-weight="700" fill="#1f1f1f" text-anchor="middle">Slovénie</text>
<text transform="translate(848.2 355.9) scale(.95 1)" font-size="13.4" font-weight="700" fill="#1f1f1f" text-anchor="middle">Croatie</text>
<text transform="translate(393.6 478.3) scale(.95 1)" font-size="13.4" font-weight="700" fill="#1f1f1f" text-anchor="middle">Andorre</text>
<text transform="translate(596.5 421.3) scale(.95 1)" font-size="13.0" font-weight="700" fill="#1f1f1f" text-anchor="middle">Monaco</text>
<text transform="translate(768.0 411.5) scale(.95 1)" font-size="11.6" font-weight="700" fill="#1f1f1f" text-anchor="middle">Saint-Marin</text>
<text transform="translate(768.5 456.5) scale(.95 1)" font-size="13.9" font-weight="700" fill="#1f1f1f" text-anchor="middle">Italie</text>
<text transform="translate(954.5 379.7) scale(.95 1)" font-size="13.4" font-weight="700" fill="#1f1f1f" text-anchor="middle">Bosnie-Herzégovine</text>
<text transform="translate(1009.0 462.0) scale(.95 1)" font-size="13.4" font-weight="700" fill="#1f1f1f" text-anchor="middle">Monténégro</text>
<text transform="translate(251.5 134.9) scale(.95 1)" font-size="11.1" font-weight="700" fill="#1f1f1f" text-anchor="middle">Guernesey</text>
<text transform="translate(266.0 146.5) scale(.95 1)" font-size="11.5" font-weight="700" fill="#1f1f1f" text-anchor="middle">Jersey</text>
</g>
<g font-family="Liberation Sans, Arial, sans-serif" fill="#4d4d52" font-size="8.6">
<text x="56.4" y="154.2" text-anchor="middle">Mer Celtique</text>
<text transform="translate(284.4 97.5) rotate(-12)" text-anchor="middle">Manche (mer)</text>
<path id="gg" d="M180.0 331.5 Q219.0 330.0 247.0 353.0" fill="none"/>
<text font-size="7.9"><textPath href="#gg">Golfe de Gascogne</textPath></text>
<text transform="translate(862.0 453.0) rotate(33)">Mer Adriatique</text>
</g>
<use href="#pin" x="421.2" y="28.0"/>
<use href="#pin" x="403.0" y="31.2"/>
<use href="#pin" x="417.3" y="43.4"/>
<use href="#pin" x="394.5" y="45.5"/>
<use href="#pin" x="447.7" y="51.7"/>
<use href="#pin" x="430.3" y="55.7"/>
<use href="#pin" x="446.9" y="62.6"/>
<use href="#pin" x="460.7" y="63.7"/>
<use href="#pin" x="435.8" y="68.2"/>
<use href="#pin" x="451.4" y="74.7"/>
<use href="#pin" x="402.2" y="77.7"/>
<use href="#pin" x="418.9" y="89.4"/>
<use href="#pin" x="453.0" y="91.8"/>
<use href="#pin" x="464.4" y="106.4"/>
<use href="#pin" x="344.2" y="110.5"/>
<use href="#pin" x="436.3" y="114.2"/>
<use href="#pin" x="377.0" y="114.6"/>
<use href="#pin" x="477.7" y="122.0"/>
<use href="#pin" x="327.4" y="127.2"/>
<use href="#pin" x="347.7" y="128.9"/>
<use href="#pin" x="551.7" y="130.5"/>
<use href="#pin" x="378.3" y="135.4"/>
<use href="#pin" x="489.1" y="139.1"/>
<use href="#pin" x="420.5" y="142.0"/>
<use href="#pin" x="421.4" y="144.3"/>
<use href="#pin" x="516.7" y="148.4"/>
<use href="#pin" x="551.7" y="152.4"/>
<use href="#pin" x="606.9" y="158.4"/>
<use href="#pin" x="208.5" y="158.6"/>
<use href="#pin" x="231.6" y="159.4"/>
<use href="#pin" x="430.9" y="161.0"/>
<use href="#pin" x="243.7" y="162.7"/>
<use href="#pin" x="253.8" y="164.1"/>
<use href="#pin" x="193.4" y="165.0"/>
<use href="#pin" x="390.5" y="165.4"/>
<use href="#pin" x="452.1" y="178.4"/>
<use href="#pin" x="284.0" y="182.5"/>
<use href="#pin" x="313.1" y="184.4"/>
<use href="#pin" x="592.0" y="184.4"/>
<use href="#pin" x="199.0" y="188.7"/>
<use href="#pin" x="346.4" y="189.0"/>
<use href="#pin" x="455.8" y="189.8"/>
<use href="#pin" x="405.6" y="192.2"/>
<use href="#pin" x="476.6" y="195.5"/>
<use href="#pin" x="224.2" y="201.2"/>
<use href="#pin" x="592.0" y="202.0"/>
<use href="#pin" x="245.4" y="205.3"/>
<use href="#pin" x="575.2" y="206.9"/>
<use href="#pin" x="488.8" y="208.2"/>
<use href="#pin" x="385.1" y="209.6"/>
<use href="#pin" x="320.9" y="216.3"/>
<use href="#pin" x="364.5" y="219.9"/>
<use href="#pin" x="558.2" y="221.2"/>
<use href="#pin" x="512.7" y="223.9"/>
<use href="#pin" x="284.0" y="227.2"/>
<use href="#pin" x="410.3" y="227.2"/>
<use href="#pin" x="421.7" y="234.5"/>
<use href="#pin" x="528.1" y="234.5"/>
<use href="#pin" x="447.7" y="240.2"/>
<use href="#pin" x="332.0" y="240.2"/>
<use href="#pin" x="397.8" y="246.7"/>
<use href="#pin" x="542.9" y="248.7"/>
<use href="#pin" x="505.7" y="249.0"/>
<use href="#pin" x="351.0" y="259.7"/>
<use href="#pin" x="507.8" y="260.7"/>
<use href="#pin" x="454.2" y="261.8"/>
<use href="#pin" x="323.7" y="273.2"/>
<use href="#pin" x="505.7" y="274.0"/>
<use href="#pin" x="300.9" y="282.4"/>
<use href="#pin" x="457.4" y="282.9"/>
<use href="#pin" x="550.1" y="294.0"/>
<use href="#pin" x="383.2" y="297.6"/>
<use href="#pin" x="446.1" y="300.0"/>
<use href="#pin" x="318.2" y="301.3"/>
<use href="#pin" x="505.7" y="301.6"/>
<use href="#pin" x="345.6" y="306.0"/>
<use href="#pin" x="542.7" y="309.7"/>
<use href="#pin" x="490.4" y="316.6"/>
<use href="#pin" x="536.2" y="328.4"/>
<use href="#pin" x="392.4" y="331.4"/>
<use href="#pin" x="511.4" y="338.5"/>
<use href="#pin" x="317.7" y="342.6"/>
<use href="#pin" x="321.4" y="349.1"/>
<use href="#pin" x="299.8" y="354.8"/>
<use href="#pin" x="502.9" y="359.3"/>
<use href="#pin" x="345.6" y="362.6"/>
<use href="#pin" x="388.9" y="365.0"/>
<use href="#pin" x="360.7" y="376.5"/>
<use href="#pin" x="385.9" y="385.8"/>
<use href="#pin" x="504.6" y="389.9"/>
<use href="#pin" x="489.6" y="394.3"/>
<use href="#pin" x="303.1" y="399.3"/>
<use href="#pin" x="589.4" y="400.4"/>
<use href="#pin" x="388.9" y="405.0"/>
<use href="#pin" x="472.9" y="406.6"/>
<use href="#pin" x="580.9" y="407.7"/>
<use href="#pin" x="288.8" y="409.9"/>
<use href="#pin" x="522.1" y="412.0"/>
<use href="#pin" x="570.9" y="413.4"/>
<use href="#pin" x="523.3" y="415.3"/>
<use href="#pin" x="525.0" y="419.3"/>
<use href="#pin" x="341.7" y="422.0"/>
<use href="#pin" x="420.9" y="423.7"/>
<use href="#pin" x="443.6" y="424.3"/>
<use href="#pin" x="544.0" y="427.7"/>
<use href="#pin" x="365.5" y="428.5"/>
<use href="#pin" x="438.7" y="447.6"/>
</g></svg>
  <div class="glogo">Google</div>
  <div class="attr" style="left:557px;width:69px;background:#e0e0e0">Raccourcis clavier</div>
  <div class="attr" style="left:627px;width:312px;background:rgba(245,245,245,.72)">Données cartographiques ©2026 GeoBasis-DE/BKG (©2009), Google, Inst. Geogr. Nacional</div>
  <div class="attr" style="left:940px;width:90px;background:rgba(245,245,245,.7);overflow:hidden"><span style="position:relative;top:5px">Conditions d'utilisation</span></div>
  <div class="ctl" style="left:990px;top:349.6px;width:29px;height:30.4px"><svg width="29" height="30" viewBox="0 -.5 29 30"><path d="M12 9.4L14.5 6.9 17 9.4M12 19.6l2.5 2.5 2.5-2.5M9.4 12L6.9 14.5 9.4 17M19.6 12l2.5 2.5-2.5 2.5" fill="none" stroke="#5a5a5a" stroke-width="1.5"/></svg></div>
  <div class="ctl" style="left:990px;top:404px;width:29px;height:61px"><svg width="29" height="61" viewBox="0 0 29 61"><path d="M8.2 15H20.8M14.5 8.7V21.3M8.2 46H20.8" stroke="#5a5a5a" stroke-width="1.6" fill="none"/><path d="M3.5 30.5H25.5" stroke="#e6e6e6" stroke-width="1"/></svg></div>
</div>
<div class="widget"></div>
<div class="sb"><i></i></div>
<div class="bottom"></div>
</body>
</html>
